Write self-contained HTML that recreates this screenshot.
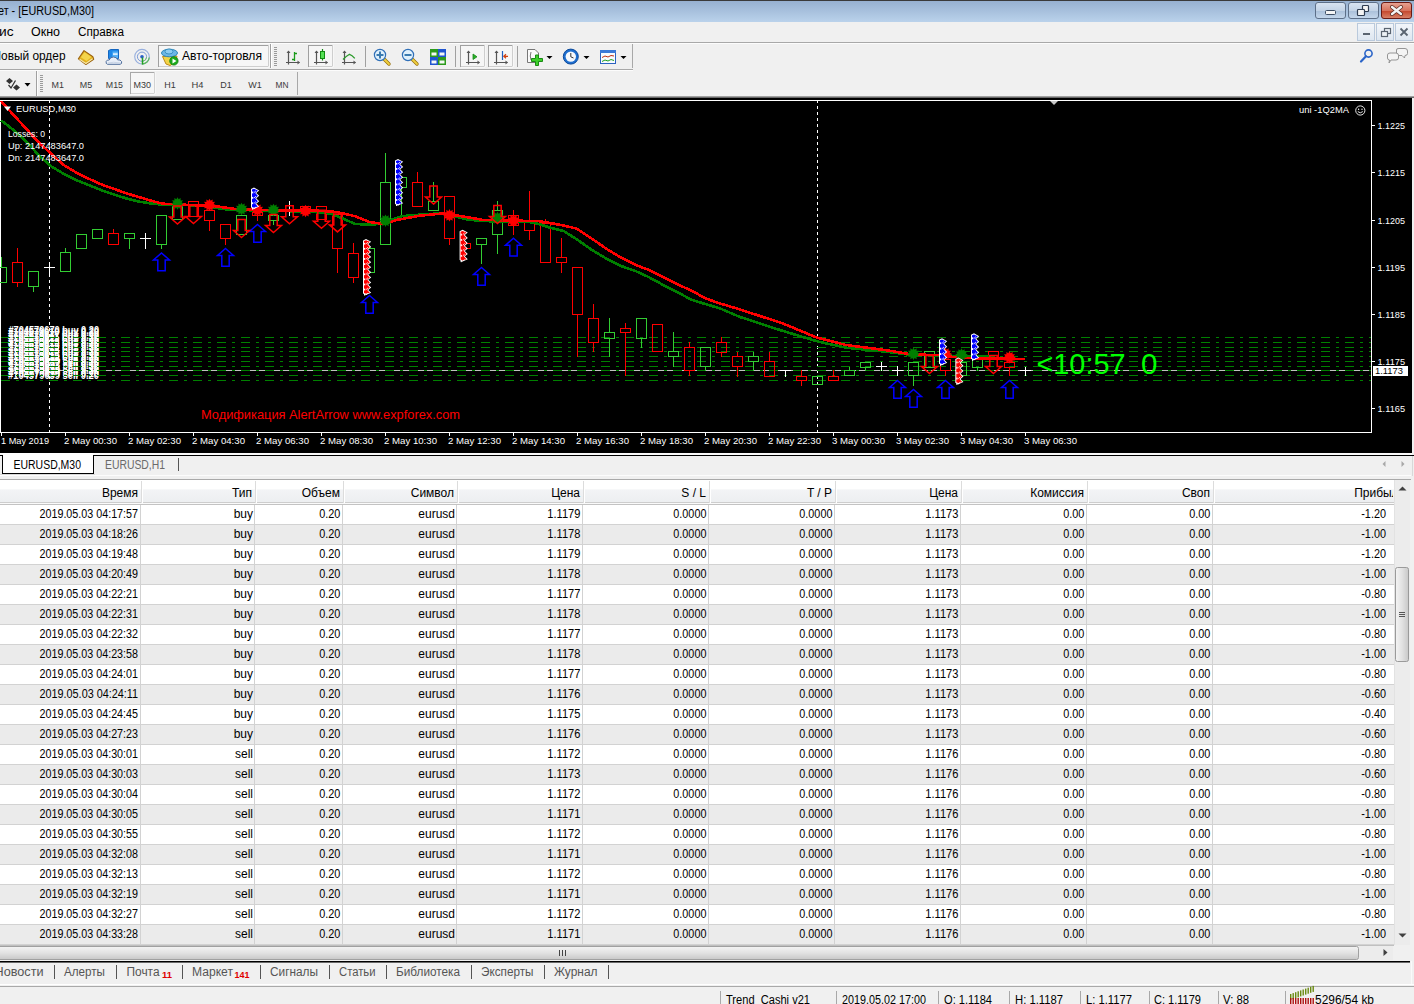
<!DOCTYPE html>
<html><head><meta charset="utf-8"><title>MT4</title>
<style>html,body{margin:0;padding:0;background:#f0f0f0;overflow:hidden;width:1414px;height:1004px}
svg{display:block;font-family:"Liberation Sans",sans-serif}</style></head>
<body><svg width="1414" height="1004" viewBox="0 0 1414 1004">
<defs>
<linearGradient id="gTitle" x1="0" y1="0" x2="0" y2="1"><stop offset="0" stop-color="#95afcf"/><stop offset="1" stop-color="#bad2eb"/></linearGradient>
<linearGradient id="gHdr" x1="0" y1="0" x2="0" y2="1"><stop offset="0" stop-color="#ffffff"/><stop offset="0.4" stop-color="#ffffff"/><stop offset="0.42" stop-color="#f3f4f6"/><stop offset="1" stop-color="#eceef0"/></linearGradient>
<linearGradient id="gScroll" x1="0" y1="0" x2="0" y2="1"><stop offset="0" stop-color="#f4f4f4"/><stop offset="0.5" stop-color="#e2e2e2"/><stop offset="1" stop-color="#c8c8c8"/></linearGradient>
<linearGradient id="gVScroll" x1="0" y1="0" x2="1" y2="0"><stop offset="0" stop-color="#f4f4f4"/><stop offset="0.5" stop-color="#e2e2e2"/><stop offset="1" stop-color="#c8c8c8"/></linearGradient>
<linearGradient id="gBtn" x1="0" y1="0" x2="0" y2="1"><stop offset="0" stop-color="#d9e4f1"/><stop offset="0.5" stop-color="#c3d3e6"/><stop offset="0.51" stop-color="#a9bfd9"/><stop offset="1" stop-color="#c6d8ec"/></linearGradient>
<linearGradient id="gClose" x1="0" y1="0" x2="0" y2="1"><stop offset="0" stop-color="#e8a494"/><stop offset="0.5" stop-color="#d7735d"/><stop offset="0.51" stop-color="#c4442a"/><stop offset="1" stop-color="#d9846a"/></linearGradient>
<linearGradient id="gMdi" x1="0" y1="0" x2="0" y2="1"><stop offset="0" stop-color="#f3f6fa"/><stop offset="1" stop-color="#dde6f0"/></linearGradient>
</defs>
<rect x="0" y="0" width="1414" height="1004" fill="#f0f0f0" />
<rect x="0" y="0" width="1414" height="22" fill="url(#gTitle)" />
<rect x="0" y="0" width="1414" height="1" fill="#3a3a3a" />
<text x="-2" y="14.6" font-size="12" fill="#000" textLength="96" lengthAdjust="spacingAndGlyphs" >ет - [EURUSD,M30]</text>
<rect x="1315.5" y="2.5" width="30" height="16" rx="2.5" fill="url(#gBtn)" stroke="#5d6f88"/>
<rect x="1348.5" y="2.5" width="30" height="16" rx="2.5" fill="url(#gBtn)" stroke="#5d6f88"/>
<rect x="1381.5" y="2.5" width="30" height="16" rx="2.5" fill="url(#gClose)" stroke="#6a1a14"/>
<rect x="1325.5" y="10.5" width="10" height="4" fill="#f4f4f4" stroke="#3c4c62" rx="1"/>
<rect x="1362.5" y="5.5" width="6" height="6" fill="#f4f4f4" stroke="#2f3d52" stroke-width="1.2" rx="0.8"/>
<rect x="1357.5" y="9.5" width="7" height="6" fill="#f4f4f4" stroke="#2f3d52" stroke-width="1.2" rx="0.8"/>
<path d="M1392 7 L1401 14 M1401 7 L1392 14" stroke="#5a2a20" stroke-width="4" stroke-linecap="round"/>
<path d="M1392 7 L1401 14 M1401 7 L1392 14" stroke="#f4f4f4" stroke-width="2.4" stroke-linecap="round"/>
<text x="-1" y="36" font-size="12" fill="#000" textLength="14.5" lengthAdjust="spacingAndGlyphs" >ис</text>
<text x="31" y="36" font-size="12" fill="#000" textLength="29" lengthAdjust="spacingAndGlyphs" >Окно</text>
<text x="78" y="36" font-size="12" fill="#000" textLength="46" lengthAdjust="spacingAndGlyphs" >Справка</text>
<rect x="1357.5" y="23.5" width="17" height="17" fill="url(#gMdi)" stroke="#b9c9dc"/>
<rect x="1376.5" y="23.5" width="17" height="17" fill="url(#gMdi)" stroke="#b9c9dc"/>
<rect x="1395.5" y="23.5" width="17" height="17" fill="url(#gMdi)" stroke="#b9c9dc"/>
<rect x="1363" y="33" width="7" height="2" fill="#5a6470"/>
<rect x="1384.5" y="28.5" width="6" height="5" fill="none" stroke="#5a6470" stroke-width="1.2"/>
<rect x="1381.5" y="31.5" width="6" height="5" fill="#eef2f6" stroke="#5a6470" stroke-width="1.2"/>
<path d="M1400.5 28.5 L1407.5 35.5 M1407.5 28.5 L1400.5 35.5" stroke="#5a6470" stroke-width="1.8"/>
<rect x="0" y="42" width="1414" height="1" fill="#a8a8a8" />
<rect x="0" y="43" width="1414" height="1" fill="#fcfcfc" />
<text x="-7.5" y="60" font-size="12" fill="#000" textLength="73" lengthAdjust="spacingAndGlyphs" >Новый ордер</text>
<path d="M84 50.6 L92.9 56.8 L93.7 59.2 L85.9 64.5 L78.4 58.8 Z" fill="#e2b01c" stroke="#9a620e" stroke-width="1.1" stroke-linejoin="round"/>
<path d="M84.6 52.2 L91.5 57 L86.5 61 L80.8 57.2 Z" fill="#f4d44a"/>
<path d="M79.6 59.2 L85.9 63.6 L92.6 58.8" fill="none" stroke="#f6e6a8" stroke-width="1.2"/>
<path d="M108.5 50.5 L111 49.5 L118.5 49.5 L118.5 58.5 L108.5 58.5 Z" fill="#1e88e8" stroke="#1466c0" stroke-width="1"/>
<path d="M112.5 51.5 L118 51.5 L118 58 L112.5 58 Z" fill="#5ab4f8"/>
<rect x="113" y="53.3" width="4.6" height="1.6" fill="#e6f4ff"/>
<path d="M107.5 64.3 Q105.6 63.8 106.2 61.4 Q107 59.6 109.2 60 Q110 57 113.5 57 Q116.8 57 117.6 59.8 Q120.5 59.4 121.6 61.6 Q122.2 64 120 64.3 Z" fill="#e8eef8" stroke="#4f6e9c" stroke-width="1"/>
<path d="M108 63 Q113 61.5 120.5 63" fill="none" stroke="#c4d0e2" stroke-width="0.9"/>
<circle cx="142" cy="56.7" r="7.3" fill="none" stroke="#7a9ad8" stroke-width="1.1" opacity="0.75"/>
<circle cx="142" cy="56.7" r="4.6" fill="none" stroke="#5f86d0" stroke-width="1" opacity="0.8"/>
<path d="M142.3 64 A7.3 7.3 0 0 0 149.3 57.5" fill="none" stroke="#5cb85c" stroke-width="1.3"/>
<path d="M142.3 61.3 A4.6 4.6 0 0 0 146.6 57.2" fill="none" stroke="#78c078" stroke-width="1"/>
<circle cx="142" cy="56.7" r="1.8" fill="#2a5fc8"/>
<path d="M142.5 57.5 L142.5 64.5" stroke="#22a022" stroke-width="1.5"/>
<rect x="158.5" y="45.5" width="110" height="21" fill="#f6f6f6" stroke="#a0a0a0"/>
<path d="M159 67 L269 67 L269 45" fill="none" stroke="#fdfdfd"/>
<path d="M162.5 56.5 L177 56 L176 62 L170 65.5 L166 64 Z" fill="#f2d448" stroke="#c08a18" stroke-width="1"/>
<ellipse cx="169.5" cy="53" rx="8" ry="3.8" fill="#6cb6e6" stroke="#2d86b8" stroke-width="1"/>
<ellipse cx="169" cy="51.5" rx="4" ry="2.5" fill="#8dccf2" stroke="#2d86b8" stroke-width="0.8"/>
<circle cx="173.9" cy="60.9" r="4.2" fill="#1cab1c" stroke="#0d7d0d" stroke-width="0.8"/>
<path d="M172.5 58.5 L176.5 61 L172.5 63.5 Z" fill="#fff"/>
<text x="182" y="60" font-size="12" fill="#000" textLength="80" lengthAdjust="spacingAndGlyphs" >Авто-торговля</text>
<rect x="270" y="44" width="1" height="24" fill="#a0a0a0" />
<rect x="271" y="44" width="1" height="24" fill="#ffffff" />
<rect x="274" y="47" width="3" height="1" fill="#9a9a9a" />
<rect x="274" y="49" width="3" height="1" fill="#9a9a9a" />
<rect x="274" y="51" width="3" height="1" fill="#9a9a9a" />
<rect x="274" y="53" width="3" height="1" fill="#9a9a9a" />
<rect x="274" y="55" width="3" height="1" fill="#9a9a9a" />
<rect x="274" y="57" width="3" height="1" fill="#9a9a9a" />
<rect x="274" y="59" width="3" height="1" fill="#9a9a9a" />
<rect x="274" y="61" width="3" height="1" fill="#9a9a9a" />
<rect x="274" y="63" width="3" height="1" fill="#9a9a9a" />
<rect x="274" y="65" width="3" height="1" fill="#9a9a9a" />
<path d="M288.5 51 L288.5 64.5 M286 62.5 L299.5 62.5" stroke="#555" stroke-width="1.2" fill="none"/>
<path d="M286.5 53 L288.5 50.5 L290.5 53 Z M297.5 60.5 L300 62.5 L297.5 64.5 Z" fill="#555"/>
<path d="M292 59.5 L294.5 59.5 L294.5 53.5 L297 53.5 M294.5 52 L294.5 61" stroke="#1a9a1a" stroke-width="1.3" fill="none"/>
<rect x="308.5" y="45.5" width="24" height="21" fill="#f6f6f6" stroke="#a0a0a0"/>
<path d="M309 67 L333 67 L333 45" fill="none" stroke="#fdfdfd"/>
<path d="M316.5 51 L316.5 64.5 M314 62.5 L327.5 62.5" stroke="#555" stroke-width="1.2" fill="none"/>
<path d="M314.5 53 L316.5 50.5 L318.5 53 Z M325.5 60.5 L328 62.5 L325.5 64.5 Z" fill="#555"/>
<path d="M322.5 49 L322.5 60.5" stroke="#138a13" stroke-width="1.2"/>
<rect x="320.5" y="51.5" width="4" height="7" fill="#55e055" stroke="#138a13"/>
<path d="M344.5 51 L344.5 64.5 M342 62.5 L355.5 62.5" stroke="#555" stroke-width="1.2" fill="none"/>
<path d="M342.5 53 L344.5 50.5 L346.5 53 Z M353.5 60.5 L356 62.5 L353.5 64.5 Z" fill="#555"/>
<path d="M343 59.5 Q346.5 56 349.5 54.3 Q352 55 354.8 58.3" stroke="#2a9a2a" stroke-width="1.3" fill="none"/>
<rect x="365" y="46" width="1" height="21" fill="#a0a0a0" />
<path d="M383 58 L389 64" stroke="#9a7410" stroke-width="3.4" stroke-linecap="round"/>
<path d="M383 58 L389 64" stroke="#f0d040" stroke-width="1.8" stroke-linecap="round"/>
<circle cx="380" cy="55" r="5.6" fill="#dff0fc" stroke="#2f6fb8" stroke-width="1.2"/>
<rect x="376.5" y="54" width="7" height="2" fill="#3a7ab0"/>
<rect x="379" y="51.5" width="2" height="7" fill="#3a7ab0"/>
<path d="M411 58 L417 64" stroke="#9a7410" stroke-width="3.4" stroke-linecap="round"/>
<path d="M411 58 L417 64" stroke="#f0d040" stroke-width="1.8" stroke-linecap="round"/>
<circle cx="408" cy="55" r="5.6" fill="#dff0fc" stroke="#2f6fb8" stroke-width="1.2"/>
<rect x="404.5" y="54" width="7" height="2" fill="#3a7ab0"/>
<rect x="430" y="49" width="8" height="8" fill="#2c9a1c" />
<rect x="431.5" y="52.5" width="5" height="3" fill="#f4f8f4" />
<rect x="438" y="49" width="8" height="8" fill="#1f55d0" />
<rect x="439.5" y="52.5" width="5" height="3" fill="#f4f8f4" />
<rect x="430" y="57" width="8" height="8" fill="#1f55d0" />
<rect x="431.5" y="60.5" width="5" height="3" fill="#f4f8f4" />
<rect x="438" y="57" width="8" height="8" fill="#2c9a1c" />
<rect x="439.5" y="60.5" width="5" height="3" fill="#f4f8f4" />
<rect x="455" y="46" width="1" height="21" fill="#a0a0a0" />
<rect x="460.5" y="45.5" width="24" height="21" fill="#f6f6f6" stroke="#a0a0a0"/>
<path d="M461 67 L485 67 L485 45" fill="none" stroke="#fdfdfd"/>
<rect x="488.5" y="45.5" width="24" height="21" fill="#f6f6f6" stroke="#a0a0a0"/>
<path d="M489 67 L513 67 L513 45" fill="none" stroke="#fdfdfd"/>
<path d="M468.5 51 L468.5 64.5 M466 62.5 L479.5 62.5" stroke="#555" stroke-width="1.2" fill="none"/>
<path d="M466.5 53 L468.5 50.5 L470.5 53 Z M477.5 60.5 L480 62.5 L477.5 64.5 Z" fill="#555"/>
<path d="M473 54 L477 56.8 L473 59.5 Z" fill="#2ab02a" stroke="#1a8a1a" stroke-width="0.8"/>
<path d="M496.5 51 L496.5 64.5 M494 62.5 L507.5 62.5" stroke="#555" stroke-width="1.2" fill="none"/>
<path d="M494.5 53 L496.5 50.5 L498.5 53 Z M505.5 60.5 L508 62.5 L505.5 64.5 Z" fill="#555"/>
<path d="M502.5 51 L502.5 60" stroke="#2060c0" stroke-width="1.2"/>
<path d="M508 56.3 L504 56.3 M506 54.3 L503.8 56.3 L506 58.3" stroke="#d04010" stroke-width="1.2" fill="none"/>
<rect x="517" y="46" width="1" height="21" fill="#a0a0a0" />
<path d="M527.5 49.5 L535 49.5 L538.5 53 L538.5 62.5 L527.5 62.5 Z" fill="#fafafa" stroke="#777"/>
<path d="M531 52 Q529.5 56 531 60" stroke="#777" fill="none"/>
<path d="M535.5 55 L538.5 55 L538.5 58.5 L542.5 58.5 L542.5 61.5 L538.5 61.5 L538.5 65.5 L535.5 65.5 L535.5 61.5 L531.5 61.5 L531.5 58.5 L535.5 58.5 Z" fill="#3ccf2a" stroke="#1a8a14" stroke-width="1"/>
<path d="M546.5 56 L552.5 56 L549.5 59 Z" fill="#000"/>
<circle cx="570.8" cy="56.6" r="7.5" fill="#1e6fd0" stroke="#0d4a9a" stroke-width="1"/>
<circle cx="570.8" cy="56.6" r="5.2" fill="#f6f9fc"/>
<path d="M570.8 53 L570.8 56.8 L573.5 58" stroke="#333" stroke-width="1" fill="none"/>
<path d="M583.5 56 L589.5 56 L586.5 59 Z" fill="#000"/>
<rect x="600.5" y="50.5" width="15" height="13" fill="#f8fbff" stroke="#2a62c0"/>
<rect x="600" y="50" width="16" height="3" fill="#3a7ad8" />
<path d="M602 57.5 L605 56 L608 57 L611 55.5 L614 56" stroke="#c03010" fill="none" stroke-width="1"/>
<path d="M602 61.5 L605 60 L608 61 L611 59.5 L614 60.5" stroke="#20a020" fill="none" stroke-width="1"/>
<path d="M620.5 56 L626.5 56 L623.5 59 Z" fill="#000"/>
<rect x="632" y="44" width="1" height="24" fill="#a8a8a8" />
<circle cx="1368.5" cy="53.5" r="3.6" fill="none" stroke="#2a64c8" stroke-width="1.6"/>
<path d="M1366 56.3 L1361 61.5" stroke="#2a64c8" stroke-width="2.2" stroke-linecap="round"/>
<path d="M1396.5 50 Q1396 48.5 1399 48.5 L1405 48.5 Q1407.5 48.5 1407.5 51 L1407.5 53.5 Q1407.5 55.5 1405 55.5 L1404.5 58 L1402 55.5 L1399 55.5 Q1396.5 55.5 1396.5 53.5 Z" fill="#f4f4f4" stroke="#8a8a8a" stroke-width="0.9"/>
<path d="M1387.5 55 Q1387.5 53 1390 53 L1396 53 Q1398.5 53 1398.5 55.5 L1398.5 58 Q1398.5 60 1396 60 L1391 60 L1389 63 L1389.5 60 Q1387.5 60 1387.5 58 Z" fill="#f4f4f4" stroke="#8a8a8a" stroke-width="0.9"/>
<rect x="0" y="69" width="633" height="1" fill="#a8a8a8" />
<rect x="0" y="70" width="633" height="1" fill="#fcfcfc" />
<path d="M6 81 L9.5 78 L13 81 L9.5 84 Z M13 87.5 L16.5 84.5 L20 87.5 L16.5 90.5 Z" fill="#333"/>
<path d="M8.5 85 L11 88 L15.5 80.5" stroke="#333" stroke-width="1.3" fill="none"/>
<path d="M24.5 83 L30.5 83 L27.5 86.5 Z" fill="#000"/>
<rect x="36" y="71" width="1" height="25" fill="#a0a0a0" />
<rect x="37" y="71" width="1" height="25" fill="#fcfcfc" />
<rect x="40" y="75" width="3" height="1" fill="#9a9a9a" />
<rect x="40" y="77" width="3" height="1" fill="#9a9a9a" />
<rect x="40" y="79" width="3" height="1" fill="#9a9a9a" />
<rect x="40" y="81" width="3" height="1" fill="#9a9a9a" />
<rect x="40" y="83" width="3" height="1" fill="#9a9a9a" />
<rect x="40" y="85" width="3" height="1" fill="#9a9a9a" />
<rect x="40" y="87" width="3" height="1" fill="#9a9a9a" />
<rect x="40" y="89" width="3" height="1" fill="#9a9a9a" />
<rect x="40" y="91" width="3" height="1" fill="#9a9a9a" />
<rect x="130.5" y="72.5" width="24" height="21" fill="#f6f6f6" stroke="#a8a8a8"/>
<path d="M131 94 L155 94 L155 72" fill="none" stroke="#fdfdfd"/>
<text x="57.7" y="88" font-size="9.6" fill="#3a3a3a" text-anchor="middle" textLength="12.4" lengthAdjust="spacingAndGlyphs" >M1</text>
<text x="86" y="88" font-size="9.6" fill="#3a3a3a" text-anchor="middle" textLength="12.4" lengthAdjust="spacingAndGlyphs" >M5</text>
<text x="114.4" y="88" font-size="9.6" fill="#3a3a3a" text-anchor="middle" textLength="17.2" lengthAdjust="spacingAndGlyphs" >M15</text>
<text x="142.3" y="88" font-size="9.6" fill="#3a3a3a" text-anchor="middle" textLength="17.5" lengthAdjust="spacingAndGlyphs" >M30</text>
<text x="170" y="88" font-size="9.6" fill="#3a3a3a" text-anchor="middle" textLength="11.5" lengthAdjust="spacingAndGlyphs" >H1</text>
<text x="197.5" y="88" font-size="9.6" fill="#3a3a3a" text-anchor="middle" textLength="12" lengthAdjust="spacingAndGlyphs" >H4</text>
<text x="226" y="88" font-size="9.6" fill="#3a3a3a" text-anchor="middle" textLength="11.5" lengthAdjust="spacingAndGlyphs" >D1</text>
<text x="255" y="88" font-size="9.6" fill="#3a3a3a" text-anchor="middle" textLength="13.5" lengthAdjust="spacingAndGlyphs" >W1</text>
<text x="282" y="88" font-size="9.6" fill="#3a3a3a" text-anchor="middle" textLength="13" lengthAdjust="spacingAndGlyphs" >MN</text>
<rect x="297" y="72" width="1" height="23" fill="#a8a8a8" />
<rect x="0" y="96" width="1414" height="1" fill="#a0a0a0" />
<rect x="0" y="97" width="1414" height="1" fill="#6a6a6a" />
<rect x="0" y="98" width="1412" height="355" fill="#000" />
<rect x="1412" y="98" width="2" height="355" fill="#f0f0f0" />
<g shape-rendering="crispEdges">
<path d="M0.5 100.5 L1371.5 100.5 L1371.5 432.5 L0.5 432.5 Z" fill="none" stroke="#fff"/>
</g>
<rect x="1372" y="125" width="3" height="1" fill="#fff" />
<text x="1377.5" y="128.6" font-size="9" fill="#fff" textLength="27.5" lengthAdjust="spacingAndGlyphs" >1.1225</text>
<rect x="1372" y="172" width="3" height="1" fill="#fff" />
<text x="1377.5" y="175.6" font-size="9" fill="#fff" textLength="27.5" lengthAdjust="spacingAndGlyphs" >1.1215</text>
<rect x="1372" y="220" width="3" height="1" fill="#fff" />
<text x="1377.5" y="223.6" font-size="9" fill="#fff" textLength="27.5" lengthAdjust="spacingAndGlyphs" >1.1205</text>
<rect x="1372" y="267" width="3" height="1" fill="#fff" />
<text x="1377.5" y="270.6" font-size="9" fill="#fff" textLength="27.5" lengthAdjust="spacingAndGlyphs" >1.1195</text>
<rect x="1372" y="314" width="3" height="1" fill="#fff" />
<text x="1377.5" y="317.6" font-size="9" fill="#fff" textLength="27.5" lengthAdjust="spacingAndGlyphs" >1.1185</text>
<rect x="1372" y="361" width="3" height="1" fill="#fff" />
<text x="1377.5" y="364.6" font-size="9" fill="#fff" textLength="27.5" lengthAdjust="spacingAndGlyphs" >1.1175</text>
<rect x="1372" y="408" width="3" height="1" fill="#fff" />
<text x="1377.5" y="411.6" font-size="9" fill="#fff" textLength="27.5" lengthAdjust="spacingAndGlyphs" >1.1165</text>
<rect x="1" y="433" width="1" height="3" fill="#fff" />
<text x="1" y="444" font-size="9.6" fill="#fff" textLength="48" lengthAdjust="spacingAndGlyphs" >1 May 2019</text>
<rect x="65" y="433" width="1" height="3" fill="#fff" />
<text x="64" y="444" font-size="9.6" fill="#fff" textLength="53" lengthAdjust="spacingAndGlyphs" >2 May 00:30</text>
<rect x="129" y="433" width="1" height="3" fill="#fff" />
<text x="128" y="444" font-size="9.6" fill="#fff" textLength="53" lengthAdjust="spacingAndGlyphs" >2 May 02:30</text>
<rect x="193" y="433" width="1" height="3" fill="#fff" />
<text x="192" y="444" font-size="9.6" fill="#fff" textLength="53" lengthAdjust="spacingAndGlyphs" >2 May 04:30</text>
<rect x="257" y="433" width="1" height="3" fill="#fff" />
<text x="256" y="444" font-size="9.6" fill="#fff" textLength="53" lengthAdjust="spacingAndGlyphs" >2 May 06:30</text>
<rect x="321" y="433" width="1" height="3" fill="#fff" />
<text x="320" y="444" font-size="9.6" fill="#fff" textLength="53" lengthAdjust="spacingAndGlyphs" >2 May 08:30</text>
<rect x="385" y="433" width="1" height="3" fill="#fff" />
<text x="384" y="444" font-size="9.6" fill="#fff" textLength="53" lengthAdjust="spacingAndGlyphs" >2 May 10:30</text>
<rect x="449" y="433" width="1" height="3" fill="#fff" />
<text x="448" y="444" font-size="9.6" fill="#fff" textLength="53" lengthAdjust="spacingAndGlyphs" >2 May 12:30</text>
<rect x="513" y="433" width="1" height="3" fill="#fff" />
<text x="512" y="444" font-size="9.6" fill="#fff" textLength="53" lengthAdjust="spacingAndGlyphs" >2 May 14:30</text>
<rect x="577" y="433" width="1" height="3" fill="#fff" />
<text x="576" y="444" font-size="9.6" fill="#fff" textLength="53" lengthAdjust="spacingAndGlyphs" >2 May 16:30</text>
<rect x="641" y="433" width="1" height="3" fill="#fff" />
<text x="640" y="444" font-size="9.6" fill="#fff" textLength="53" lengthAdjust="spacingAndGlyphs" >2 May 18:30</text>
<rect x="705" y="433" width="1" height="3" fill="#fff" />
<text x="704" y="444" font-size="9.6" fill="#fff" textLength="53" lengthAdjust="spacingAndGlyphs" >2 May 20:30</text>
<rect x="769" y="433" width="1" height="3" fill="#fff" />
<text x="768" y="444" font-size="9.6" fill="#fff" textLength="53" lengthAdjust="spacingAndGlyphs" >2 May 22:30</text>
<rect x="833" y="433" width="1" height="3" fill="#fff" />
<text x="832" y="444" font-size="9.6" fill="#fff" textLength="53" lengthAdjust="spacingAndGlyphs" >3 May 00:30</text>
<rect x="897" y="433" width="1" height="3" fill="#fff" />
<text x="896" y="444" font-size="9.6" fill="#fff" textLength="53" lengthAdjust="spacingAndGlyphs" >3 May 02:30</text>
<rect x="961" y="433" width="1" height="3" fill="#fff" />
<text x="960" y="444" font-size="9.6" fill="#fff" textLength="53" lengthAdjust="spacingAndGlyphs" >3 May 04:30</text>
<rect x="1025" y="433" width="1" height="3" fill="#fff" />
<text x="1024" y="444" font-size="9.6" fill="#fff" textLength="53" lengthAdjust="spacingAndGlyphs" >3 May 06:30</text>
<path d="M1050 101 L1058 101 L1054 105 Z" fill="#c8c8c8"/>
<g shape-rendering="crispEdges">
<path d="M49.5 100 L49.5 432" stroke="#fff" stroke-dasharray="3 3"/>
<path d="M817.5 100 L817.5 432" stroke="#fff" stroke-dasharray="3 3"/>
</g>
<rect x="2" y="370" width="1369" height="1" fill="#c0c0c0" />
<text x="8" y="335.5" font-size="11" fill="#fff" textLength="91" lengthAdjust="spacingAndGlyphs" font-weight="bold" >#104579610 buy 0.20</text>
<text x="8.5" y="333.5" font-size="11" fill="#fff" textLength="90.5" lengthAdjust="spacingAndGlyphs" font-weight="bold" >#704579670 buy 0.20</text>
<text x="8" y="340.5" font-size="11" fill="#fff" textLength="91" lengthAdjust="spacingAndGlyphs" font-weight="bold" >#104579611 buy 0.20</text>
<text x="8.5" y="338.5" font-size="11" fill="#fff" textLength="90.5" lengthAdjust="spacingAndGlyphs" font-weight="bold" >#704579677 buy 0.20</text>
<text x="8" y="345.5" font-size="11" fill="#fff" textLength="91" lengthAdjust="spacingAndGlyphs" font-weight="bold" >#104579612 buy 0.20</text>
<text x="8.5" y="343.5" font-size="11" fill="#fff" textLength="90.5" lengthAdjust="spacingAndGlyphs" font-weight="bold" >#704579672 buy 0.20</text>
<text x="8" y="349.5" font-size="11" fill="#fff" textLength="91" lengthAdjust="spacingAndGlyphs" font-weight="bold" >#104579613 buy 0.20</text>
<text x="8.5" y="347.5" font-size="11" fill="#fff" textLength="90.5" lengthAdjust="spacingAndGlyphs" font-weight="bold" >#704579673 buy 0.20</text>
<text x="8" y="354.5" font-size="11" fill="#fff" textLength="91" lengthAdjust="spacingAndGlyphs" font-weight="bold" >#104579614 buy 0.20</text>
<text x="8.5" y="352.5" font-size="11" fill="#fff" textLength="90.5" lengthAdjust="spacingAndGlyphs" font-weight="bold" >#704579674 buy 0.20</text>
<text x="8" y="359.5" font-size="11" fill="#fff" textLength="91" lengthAdjust="spacingAndGlyphs" font-weight="bold" >#104579615 buy 0.20</text>
<text x="8.5" y="357.5" font-size="11" fill="#fff" textLength="90.5" lengthAdjust="spacingAndGlyphs" font-weight="bold" >#704579675 buy 0.20</text>
<text x="8" y="364.5" font-size="11" fill="#fff" textLength="91" lengthAdjust="spacingAndGlyphs" font-weight="bold" >#104579636 sell 0.20</text>
<text x="8.5" y="362.5" font-size="11" fill="#fff" textLength="90.5" lengthAdjust="spacingAndGlyphs" font-weight="bold" >#704579636 sell 0.20</text>
<text x="8" y="368.5" font-size="11" fill="#fff" textLength="91" lengthAdjust="spacingAndGlyphs" font-weight="bold" >#104579637 sell 0.20</text>
<text x="8.5" y="366.5" font-size="11" fill="#fff" textLength="90.5" lengthAdjust="spacingAndGlyphs" font-weight="bold" >#704579637 sell 0.20</text>
<text x="8" y="373.5" font-size="11" fill="#fff" textLength="91" lengthAdjust="spacingAndGlyphs" font-weight="bold" >#104579638 sell 0.20</text>
<text x="8.5" y="371.5" font-size="11" fill="#fff" textLength="90.5" lengthAdjust="spacingAndGlyphs" font-weight="bold" >#704579638 sell 0.20</text>
<text x="8" y="378.5" font-size="11" fill="#fff" textLength="91" lengthAdjust="spacingAndGlyphs" font-weight="bold" >#104579639 sell 0.20</text>
<text x="8.5" y="376.5" font-size="11" fill="#fff" textLength="90.5" lengthAdjust="spacingAndGlyphs" font-weight="bold" >#704579639 sell 0.20</text>
<g shape-rendering="crispEdges">
<path d="M1 337.5 L1371 337.5" stroke="#008000" stroke-dasharray="9 6 3 6"/>
<path d="M1 342.5 L1371 342.5" stroke="#008000" stroke-dasharray="9 6 3 6"/>
<path d="M1 347.5 L1371 347.5" stroke="#008000" stroke-dasharray="9 6 3 6"/>
<path d="M1 351.5 L1371 351.5" stroke="#008000" stroke-dasharray="9 6 3 6"/>
<path d="M1 356.5 L1371 356.5" stroke="#008000" stroke-dasharray="9 6 3 6"/>
<path d="M1 361.5 L1371 361.5" stroke="#008000" stroke-dasharray="9 6 3 6"/>
<path d="M1 366.5 L1371 366.5" stroke="#008000" stroke-dasharray="9 6 3 6"/>
<path d="M1 370.5 L1371 370.5" stroke="#008000" stroke-dasharray="9 6 3 6"/>
<path d="M1 375.5 L1371 375.5" stroke="#008000" stroke-dasharray="9 6 3 6"/>
<path d="M1 380.5 L1371 380.5" stroke="#008000" stroke-dasharray="9 6 3 6"/>
</g>
<rect x="1373" y="366" width="35" height="10" fill="#fff" />
<text x="1375" y="374" font-size="9" fill="#000" textLength="28" lengthAdjust="spacingAndGlyphs" >1.1173</text>
<g shape-rendering="crispEdges" fill="none">
<rect x="-3.5" y="267.5" width="10" height="15" stroke="#32cd32"/>
<path d="M1.5 257 L1.5 267" stroke="#32cd32"/>
<rect x="12.5" y="262.5" width="10" height="20" stroke="#ff0000"/>
<path d="M17.5 248 L17.5 262" stroke="#ff0000"/>
<path d="M17.5 283 L17.5 287" stroke="#ff0000"/>
<rect x="28.5" y="271.5" width="10" height="15" stroke="#32cd32"/>
<path d="M33.5 287 L33.5 292" stroke="#32cd32"/>
<rect x="60.5" y="252.5" width="10" height="19" stroke="#32cd32"/>
<path d="M65.5 248 L65.5 252" stroke="#32cd32"/>
<rect x="76.5" y="234.5" width="10" height="14" stroke="#32cd32"/>
<rect x="92.5" y="229.5" width="10" height="9" stroke="#32cd32"/>
<rect x="108.5" y="233.5" width="10" height="11" stroke="#ff0000"/>
<path d="M113.5 229 L113.5 233" stroke="#ff0000"/>
<rect x="124.5" y="233.5" width="10" height="5" stroke="#32cd32"/>
<path d="M129.5 239 L129.5 249" stroke="#32cd32"/>
<rect x="156.5" y="215.5" width="10" height="29" stroke="#32cd32"/>
<path d="M161.5 245 L161.5 249" stroke="#32cd32"/>
<rect x="172.5" y="205.5" width="10" height="14" stroke="#32cd32"/>
<rect x="188.5" y="201.5" width="10" height="15" stroke="#ff0000"/>
<rect x="204.5" y="210.5" width="10" height="10" stroke="#ff0000"/>
<path d="M209.5 221 L209.5 231" stroke="#ff0000"/>
<rect x="220.5" y="224.5" width="10" height="14" stroke="#ff0000"/>
<path d="M225.5 239 L225.5 245" stroke="#ff0000"/>
<rect x="236.5" y="215.5" width="10" height="19" stroke="#32cd32"/>
<rect x="252.5" y="211.5" width="10" height="4" stroke="#ff0000"/>
<path d="M257.5 216 L257.5 221" stroke="#ff0000"/>
<rect x="268.5" y="215.5" width="10" height="5" stroke="#32cd32"/>
<path d="M273.5 221 L273.5 225" stroke="#32cd32"/>
<rect x="300.5" y="206.5" width="10" height="4" stroke="#ff0000"/>
<rect x="316.5" y="206.5" width="10" height="13" stroke="#ff0000"/>
<rect x="332.5" y="214.5" width="10" height="34" stroke="#ff0000"/>
<path d="M337.5 249 L337.5 273" stroke="#ff0000"/>
<rect x="348.5" y="253.5" width="10" height="24" stroke="#ff0000"/>
<path d="M353.5 243 L353.5 253" stroke="#ff0000"/>
<path d="M353.5 278 L353.5 283" stroke="#ff0000"/>
<rect x="364.5" y="248.5" width="10" height="24" stroke="#32cd32"/>
<rect x="380.5" y="182.5" width="10" height="62" stroke="#32cd32"/>
<path d="M385.5 153 L385.5 182" stroke="#32cd32"/>
<rect x="396.5" y="177.5" width="10" height="10" stroke="#32cd32"/>
<path d="M401.5 188 L401.5 215" stroke="#32cd32"/>
<rect x="412.5" y="182.5" width="10" height="24" stroke="#ff0000"/>
<path d="M417.5 172 L417.5 182" stroke="#ff0000"/>
<rect x="428.5" y="201.5" width="10" height="9" stroke="#32cd32"/>
<path d="M433.5 182 L433.5 201" stroke="#32cd32"/>
<rect x="444.5" y="196.5" width="10" height="42" stroke="#ff0000"/>
<path d="M449.5 239 L449.5 245" stroke="#ff0000"/>
<rect x="460.5" y="243.5" width="10" height="5" stroke="#ff0000"/>
<rect x="476.5" y="238.5" width="10" height="6" stroke="#32cd32"/>
<path d="M481.5 245 L481.5 264" stroke="#32cd32"/>
<rect x="492.5" y="210.5" width="10" height="24" stroke="#32cd32"/>
<path d="M497.5 201 L497.5 210" stroke="#32cd32"/>
<path d="M497.5 235 L497.5 254" stroke="#32cd32"/>
<rect x="508.5" y="215.5" width="10" height="10" stroke="#ff0000"/>
<path d="M513.5 210 L513.5 215" stroke="#ff0000"/>
<path d="M513.5 226 L513.5 235" stroke="#ff0000"/>
<rect x="524.5" y="220.5" width="10" height="10" stroke="#ff0000"/>
<path d="M529.5 191 L529.5 220" stroke="#ff0000"/>
<path d="M529.5 231 L529.5 240" stroke="#ff0000"/>
<rect x="540.5" y="223.5" width="10" height="39" stroke="#ff0000"/>
<path d="M545.5 219 L545.5 223" stroke="#ff0000"/>
<rect x="556.5" y="257.5" width="10" height="5" stroke="#ff0000"/>
<path d="M561.5 238 L561.5 257" stroke="#ff0000"/>
<path d="M561.5 263 L561.5 273" stroke="#ff0000"/>
<rect x="572.5" y="267.5" width="10" height="47" stroke="#ff0000"/>
<path d="M577.5 315 L577.5 357" stroke="#ff0000"/>
<rect x="588.5" y="318.5" width="10" height="24" stroke="#ff0000"/>
<path d="M593.5 304 L593.5 318" stroke="#ff0000"/>
<path d="M593.5 343 L593.5 352" stroke="#ff0000"/>
<rect x="604.5" y="332.5" width="10" height="6" stroke="#32cd32"/>
<path d="M609.5 318 L609.5 332" stroke="#32cd32"/>
<path d="M609.5 339 L609.5 357" stroke="#32cd32"/>
<rect x="620.5" y="328.5" width="10" height="4" stroke="#ff0000"/>
<path d="M625.5 323 L625.5 328" stroke="#ff0000"/>
<path d="M625.5 333 L625.5 376" stroke="#ff0000"/>
<rect x="636.5" y="318.5" width="10" height="20" stroke="#32cd32"/>
<path d="M641.5 339 L641.5 348" stroke="#32cd32"/>
<rect x="652.5" y="324.5" width="10" height="27" stroke="#ff0000"/>
<rect x="668.5" y="351.5" width="10" height="5" stroke="#32cd32"/>
<path d="M673.5 332 L673.5 351" stroke="#32cd32"/>
<path d="M673.5 357 L673.5 367" stroke="#32cd32"/>
<rect x="684.5" y="347.5" width="10" height="23" stroke="#ff0000"/>
<path d="M689.5 342 L689.5 347" stroke="#ff0000"/>
<path d="M689.5 371 L689.5 376" stroke="#ff0000"/>
<rect x="700.5" y="347.5" width="10" height="19" stroke="#32cd32"/>
<path d="M705.5 367 L705.5 371" stroke="#32cd32"/>
<rect x="716.5" y="342.5" width="10" height="10" stroke="#ff0000"/>
<path d="M721.5 337 L721.5 342" stroke="#ff0000"/>
<path d="M721.5 353 L721.5 357" stroke="#ff0000"/>
<rect x="732.5" y="356.5" width="10" height="10" stroke="#ff0000"/>
<path d="M737.5 352 L737.5 356" stroke="#ff0000"/>
<path d="M737.5 367 L737.5 377" stroke="#ff0000"/>
<rect x="748.5" y="356.5" width="10" height="5" stroke="#32cd32"/>
<path d="M753.5 352 L753.5 356" stroke="#32cd32"/>
<path d="M753.5 362 L753.5 371" stroke="#32cd32"/>
<rect x="764.5" y="361.5" width="10" height="15" stroke="#ff0000"/>
<path d="M769.5 352 L769.5 361" stroke="#ff0000"/>
<rect x="796.5" y="376.5" width="10" height="4" stroke="#ff0000"/>
<path d="M801.5 370 L801.5 376" stroke="#ff0000"/>
<path d="M801.5 381 L801.5 386" stroke="#ff0000"/>
<rect x="812.5" y="376.5" width="10" height="8" stroke="#32cd32"/>
<rect x="828.5" y="376.5" width="10" height="4" stroke="#ff0000"/>
<path d="M833.5 370 L833.5 376" stroke="#ff0000"/>
<rect x="844.5" y="370.5" width="10" height="5" stroke="#32cd32"/>
<path d="M849.5 367 L849.5 370" stroke="#32cd32"/>
<rect x="860.5" y="362.5" width="10" height="5" stroke="#32cd32"/>
<path d="M865.5 368 L865.5 371" stroke="#32cd32"/>
<rect x="908.5" y="362.5" width="10" height="13" stroke="#32cd32"/>
<path d="M913.5 376 L913.5 386" stroke="#32cd32"/>
<rect x="924.5" y="351.5" width="10" height="16" stroke="#32cd32"/>
<rect x="940.5" y="359.5" width="10" height="11" stroke="#ff0000"/>
<path d="M945.5 371 L945.5 376" stroke="#ff0000"/>
<rect x="956.5" y="362.5" width="10" height="13" stroke="#32cd32"/>
<rect x="972.5" y="359.5" width="10" height="8" stroke="#32cd32"/>
<path d="M977.5 368 L977.5 371" stroke="#32cd32"/>
<rect x="988.5" y="351.5" width="10" height="7" stroke="#ff0000"/>
<rect x="1004.5" y="362.5" width="10" height="5" stroke="#ff0000"/>
<path d="M1009.5 368 L1009.5 376" stroke="#ff0000"/>
<path d="M44 267.5 L55 267.5 M49.5 262 L49.5 275" stroke="#fff"/>
<path d="M140 238.5 L151 238.5 M145.5 233 L145.5 249" stroke="#fff"/>
<path d="M284 210.5 L295 210.5 M289.5 201 L289.5 216" stroke="#fff"/>
<path d="M780 370.5 L791 370.5 M785.5 370 L785.5 377" stroke="#fff"/>
<path d="M876 366.5 L887 366.5 M881.5 362 L881.5 371" stroke="#fff"/>
<path d="M892 370.5 L903 370.5 M897.5 366 L897.5 376" stroke="#fff"/>
<path d="M1020 370.5 L1031 370.5 M1025.5 367 L1025.5 376" stroke="#fff"/>
</g>
<polyline points="1,120.4 12.7,129.3 25.5,140.7 38.2,154.7 50.9,166.2 63.6,173.8 76.4,180.2 89.1,185.3 101.8,190.4 114.6,194.8 127.3,198.7 140,201.8 152.8,203.7 160.4,204.4 202.4,205.6 223.6,209.1 236.4,209.9 310,211.7 329.7,213.4 343.9,219 355,224 373.4,224.7 383.3,222.6 401.7,216.2 425.7,214.1 442.7,213.4 468.2,219.8 489.4,221.2 524.7,221.2 538.9,224 550,227.7 564.1,231.2 578.3,240.4 592.4,250.3 606.6,258.8 620.7,265.9 634.9,270.8 649,277.2 663.2,285 677.3,292 691.4,299.8 705.6,304.1 719.7,308.3 740,317 782.4,330.8 817.4,341.4 846.1,347.7 888.5,352 909.7,354.7 994.6,356.9" fill="none" stroke="#008000" stroke-width="2.6" shape-rendering="crispEdges"/>
<polyline points="1,101 12.7,114 25.5,128 38.2,142 50.9,153.5 63.6,165 76.4,172.6 89.1,178.9 101.8,184.6 114.6,189.1 127.3,193.6 140,197.4 152.8,201.2 162.9,203.7 188.3,204.9 213.7,206 236.4,209.1 259,209.9 287.3,210.6 315.6,210.6 336.8,212 355,216.2 369.1,221.9 383.3,224 397.4,219.8 418.6,215.9 442.7,213.4 461,216.2 482.3,219.8 510.6,220.5 538.9,221.2 550,223 564.1,225.6 576.9,228.7 592.4,239 606.6,248.9 620.7,257.4 634.9,264.5 649,270.1 663.2,277.2 677.3,284.3 691.4,290.6 705.6,298.4 719.7,303.4 740,309.5 782.4,323.3 817.4,337.8 846.1,345 888.5,350.5 909.7,354.1 918,354.7 939.5,355 952.2,356.9 973.4,358.3 1025.4,359" fill="none" stroke="#ff0000" stroke-width="2.6" shape-rendering="crispEdges"/>
<polygon points="183.8,203.5 181.65,204.61 182.96,206.65 180.54,206.54 180.65,208.96 178.61,207.65 177.5,209.8 176.39,207.65 174.35,208.96 174.46,206.54 172.04,206.65 173.35,204.61 171.2,203.5 173.35,202.39 172.04,200.35 174.46,200.46 174.35,198.04 176.39,199.35 177.5,197.2 178.61,199.35 180.65,198.04 180.54,200.46 182.96,200.35 181.65,202.39" fill="#008000"/>
<polygon points="247.8,209.0 245.65,210.11 246.96,212.15 244.54,212.04 244.65,214.46 242.61,213.15 241.5,215.3 240.39,213.15 238.35,214.46 238.46,212.04 236.04,212.15 237.35,210.11 235.2,209.0 237.35,207.89 236.04,205.85 238.46,205.96 238.35,203.54 240.39,204.85 241.5,202.7 242.61,204.85 244.65,203.54 244.54,205.96 246.96,205.85 245.65,207.89" fill="#008000"/>
<polygon points="279.8,210.0 277.65,211.11 278.96,213.15 276.54,213.04 276.65,215.46 274.61,214.15 273.5,216.3 272.39,214.15 270.35,215.46 270.46,213.04 268.04,213.15 269.35,211.11 267.2,210.0 269.35,208.89 268.04,206.85 270.46,206.96 270.35,204.54 272.39,205.85 273.5,203.7 274.61,205.85 276.65,204.54 276.54,206.96 278.96,206.85 277.65,208.89" fill="#008000"/>
<polygon points="391.8,220.7 389.65,221.81 390.96,223.85 388.54,223.74 388.65,226.16 386.61,224.85 385.5,227.0 384.39,224.85 382.35,226.16 382.46,223.74 380.04,223.85 381.35,221.81 379.2,220.7 381.35,219.59 380.04,217.55 382.46,217.66 382.35,215.24 384.39,216.55 385.5,214.4 386.61,216.55 388.65,215.24 388.54,217.66 390.96,217.55 389.65,219.59" fill="#008000"/>
<polygon points="503.8,218.0 501.65,219.11 502.96,221.15 500.54,221.04 500.65,223.46 498.61,222.15 497.5,224.3 496.39,222.15 494.35,223.46 494.46,221.04 492.04,221.15 493.35,219.11 491.2,218.0 493.35,216.89 492.04,214.85 494.46,214.96 494.35,212.54 496.39,213.85 497.5,211.7 498.61,213.85 500.65,212.54 500.54,214.96 502.96,214.85 501.65,216.89" fill="#008000"/>
<polygon points="919.8,353.8 917.65,354.91 918.96,356.95 916.54,356.84 916.65,359.26 914.61,357.95 913.5,360.1 912.39,357.95 910.35,359.26 910.46,356.84 908.04,356.95 909.35,354.91 907.2,353.8 909.35,352.69 908.04,350.65 910.46,350.76 910.35,348.34 912.39,349.65 913.5,347.5 914.61,349.65 916.65,348.34 916.54,350.76 918.96,350.65 917.65,352.69" fill="#008000"/>
<polygon points="967.8,354.6 965.65,355.71 966.96,357.75 964.54,357.64 964.65,360.06 962.61,358.75 961.5,360.9 960.39,358.75 958.35,360.06 958.46,357.64 956.04,357.75 957.35,355.71 955.2,354.6 957.35,353.49 956.04,351.45 958.46,351.56 958.35,349.14 960.39,350.45 961.5,348.3 962.61,350.45 964.65,349.14 964.54,351.56 966.96,351.45 965.65,353.49" fill="#008000"/>
<polygon points="215.8,205.0 213.65,206.11 214.96,208.15 212.54,208.04 212.65,210.46 210.61,209.15 209.5,211.3 208.39,209.15 206.35,210.46 206.46,208.04 204.04,208.15 205.35,206.11 203.2,205.0 205.35,203.89 204.04,201.85 206.46,201.96 206.35,199.54 208.39,200.85 209.5,198.7 210.61,200.85 212.65,199.54 212.54,201.96 214.96,201.85 213.65,203.89" fill="#ff0000"/>
<polygon points="263.8,210.0 261.65,211.11 262.96,213.15 260.54,213.04 260.65,215.46 258.61,214.15 257.5,216.3 256.39,214.15 254.35,215.46 254.46,213.04 252.04,213.15 253.35,211.11 251.2,210.0 253.35,208.89 252.04,206.85 254.46,206.96 254.35,204.54 256.39,205.85 257.5,203.7 258.61,205.85 260.65,204.54 260.54,206.96 262.96,206.85 261.65,208.89" fill="#ff0000"/>
<polygon points="311.8,211.0 309.65,212.11 310.96,214.15 308.54,214.04 308.65,216.46 306.61,215.15 305.5,217.3 304.39,215.15 302.35,216.46 302.46,214.04 300.04,214.15 301.35,212.11 299.2,211.0 301.35,209.89 300.04,207.85 302.46,207.96 302.35,205.54 304.39,206.85 305.5,204.7 306.61,206.85 308.65,205.54 308.54,207.96 310.96,207.85 309.65,209.89" fill="#ff0000"/>
<polygon points="455.8,215.3 453.65,216.41 454.96,218.45 452.54,218.34 452.65,220.76 450.61,219.45 449.5,221.6 448.39,219.45 446.35,220.76 446.46,218.34 444.04,218.45 445.35,216.41 443.2,215.3 445.35,214.19 444.04,212.15 446.46,212.26 446.35,209.84 448.39,211.15 449.5,209.0 450.61,211.15 452.65,209.84 452.54,212.26 454.96,212.15 453.65,214.19" fill="#ff0000"/>
<polygon points="519.8,220.7 517.65,221.81 518.96,223.85 516.54,223.74 516.65,226.16 514.61,224.85 513.5,227.0 512.39,224.85 510.35,226.16 510.46,223.74 508.04,223.85 509.35,221.81 507.2,220.7 509.35,219.59 508.04,217.55 510.46,217.66 510.35,215.24 512.39,216.55 513.5,214.4 514.61,216.55 516.65,215.24 516.54,217.66 518.96,217.55 517.65,219.59" fill="#ff0000"/>
<polygon points="951.8,353.8 949.65,354.91 950.96,356.95 948.54,356.84 948.65,359.26 946.61,357.95 945.5,360.1 944.39,357.95 942.35,359.26 942.46,356.84 940.04,356.95 941.35,354.91 939.2,353.8 941.35,352.69 940.04,350.65 942.46,350.76 942.35,348.34 944.39,349.65 945.5,347.5 946.61,349.65 948.65,348.34 948.54,350.76 950.96,350.65 949.65,352.69" fill="#ff0000"/>
<polygon points="1015.8,357.4 1013.65,358.51 1014.96,360.55 1012.54,360.44 1012.65,362.86 1010.61,361.55 1009.5,363.7 1008.39,361.55 1006.35,362.86 1006.46,360.44 1004.04,360.55 1005.35,358.51 1003.2,357.4 1005.35,356.29 1004.04,354.25 1006.46,354.36 1006.35,351.94 1008.39,353.25 1009.5,351.1 1010.61,353.25 1012.65,351.94 1012.54,354.36 1014.96,354.25 1013.65,356.29" fill="#ff0000"/>
<polygon points="161.5,253.0 169.5,260.0 165.2,260.0 165.2,270.8 157.8,270.8 157.8,260.0 153.5,260.0" fill="none" stroke="#0000ff" stroke-width="1.5" stroke-linejoin="miter"/>
<polygon points="225.5,248.5 233.5,255.5 229.2,255.5 229.2,266.3 221.8,266.3 221.8,255.5 217.5,255.5" fill="none" stroke="#0000ff" stroke-width="1.5" stroke-linejoin="miter"/>
<polygon points="257.5,224.5 265.5,231.5 261.2,231.5 261.2,242.3 253.8,242.3 253.8,231.5 249.5,231.5" fill="none" stroke="#0000ff" stroke-width="1.5" stroke-linejoin="miter"/>
<polygon points="369.5,295.5 377.5,302.5 373.2,302.5 373.2,313.3 365.8,313.3 365.8,302.5 361.5,302.5" fill="none" stroke="#0000ff" stroke-width="1.5" stroke-linejoin="miter"/>
<polygon points="481.5,267.5 489.5,274.5 485.2,274.5 485.2,285.3 477.8,285.3 477.8,274.5 473.5,274.5" fill="none" stroke="#0000ff" stroke-width="1.5" stroke-linejoin="miter"/>
<polygon points="513.5,238.3 521.5,245.3 517.2,245.3 517.2,256.1 509.8,256.1 509.8,245.3 505.5,245.3" fill="none" stroke="#0000ff" stroke-width="1.5" stroke-linejoin="miter"/>
<polygon points="897.5,380.5 905.5,387.5 901.2,387.5 901.2,398.3 893.8,398.3 893.8,387.5 889.5,387.5" fill="none" stroke="#0000ff" stroke-width="1.5" stroke-linejoin="miter"/>
<polygon points="913.5,389.5 921.5,396.5 917.2,396.5 917.2,407.3 909.8,407.3 909.8,396.5 905.5,396.5" fill="none" stroke="#0000ff" stroke-width="1.5" stroke-linejoin="miter"/>
<polygon points="945.5,380.5 953.5,387.5 949.2,387.5 949.2,398.3 941.8,398.3 941.8,387.5 937.5,387.5" fill="none" stroke="#0000ff" stroke-width="1.5" stroke-linejoin="miter"/>
<polygon points="1009.5,380.5 1017.5,387.5 1013.2,387.5 1013.2,398.3 1005.8,398.3 1005.8,387.5 1001.5,387.5" fill="none" stroke="#0000ff" stroke-width="1.5" stroke-linejoin="miter"/>
<polygon points="177.5,224.0 185.5,217.0 181.2,217.0 181.2,206.0 173.8,206.0 173.8,217.0 169.5,217.0" fill="none" stroke="#ff0000" stroke-width="1.5" stroke-linejoin="miter"/>
<polygon points="193.5,223.5 201.5,216.5 197.2,216.5 197.2,205.5 189.8,205.5 189.8,216.5 185.5,216.5" fill="none" stroke="#ff0000" stroke-width="1.5" stroke-linejoin="miter"/>
<polygon points="241.5,237.5 249.5,230.5 245.2,230.5 245.2,219.5 237.8,219.5 237.8,230.5 233.5,230.5" fill="none" stroke="#ff0000" stroke-width="1.5" stroke-linejoin="miter"/>
<polygon points="273.5,232.5 281.5,225.5 277.2,225.5 277.2,214.5 269.8,214.5 269.8,225.5 265.5,225.5" fill="none" stroke="#ff0000" stroke-width="1.5" stroke-linejoin="miter"/>
<polygon points="289.5,223.8 297.5,216.8 293.2,216.8 293.2,205.8 285.8,205.8 285.8,216.8 281.5,216.8" fill="none" stroke="#ff0000" stroke-width="1.5" stroke-linejoin="miter"/>
<polygon points="321.5,228.3 329.5,221.3 325.2,221.3 325.2,210.3 317.8,210.3 317.8,221.3 313.5,221.3" fill="none" stroke="#ff0000" stroke-width="1.5" stroke-linejoin="miter"/>
<polygon points="337.5,231.9 345.5,224.9 341.2,224.9 341.2,213.9 333.8,213.9 333.8,224.9 329.5,224.9" fill="none" stroke="#ff0000" stroke-width="1.5" stroke-linejoin="miter"/>
<polygon points="433.5,204.1 441.5,197.1 437.2,197.1 437.2,186.1 429.8,186.1 429.8,197.1 425.5,197.1" fill="none" stroke="#ff0000" stroke-width="1.5" stroke-linejoin="miter"/>
<polygon points="497.5,223.5 505.5,216.5 501.2,216.5 501.2,205.5 493.8,205.5 493.8,216.5 489.5,216.5" fill="none" stroke="#ff0000" stroke-width="1.5" stroke-linejoin="miter"/>
<polygon points="929.5,373.5 937.5,366.5 933.2,366.5 933.2,355.5 925.8,355.5 925.8,366.5 921.5,366.5" fill="none" stroke="#ff0000" stroke-width="1.5" stroke-linejoin="miter"/>
<polygon points="993.5,373.5 1001.5,366.5 997.2,366.5 997.2,355.5 989.8,355.5 989.8,366.5 985.5,366.5" fill="none" stroke="#ff0000" stroke-width="1.5" stroke-linejoin="miter"/>
<polygon points="251,189.0 254,187.5 259.2,190.45625 256.2,192.875 259.2,195.83125 256.2,198.25 259.2,201.20625 256.2,203.625 259.2,206.58125 254,209 251,207.5" fill="#fff"/>
<polygon points="252,189.5 254,188.7 257.8,190.45625 255.2,192.875 257.8,195.83125 255.2,198.25 257.8,201.20625 255.2,203.625 257.8,206.58125 254,207.8 252,207" fill="#0000ff"/>
<rect x="252" y="191.53" width="1.3" height="1.88" fill="#fff"/>
<path d="M254 192.61 L256 190.72" stroke="#fff" stroke-width="0.8"/>
<rect x="252" y="196.91" width="1.3" height="1.88" fill="#fff"/>
<path d="M254 197.98 L256 196.10" stroke="#fff" stroke-width="0.8"/>
<rect x="252" y="202.28" width="1.3" height="1.88" fill="#fff"/>
<path d="M254 203.36 L256 201.47" stroke="#fff" stroke-width="0.8"/>
<rect x="252" y="207.66" width="1.3" height="1.88" fill="#fff"/>
<path d="M254 208.73 L256 206.85" stroke="#fff" stroke-width="0.8"/>
<polygon points="395,160.5 398,159 403.2,161.84166666666667 400.2,164.16666666666666 403.2,167.00833333333333 400.2,169.33333333333331 403.2,172.175 400.2,174.5 403.2,177.34166666666667 400.2,179.66666666666666 403.2,182.50833333333333 400.2,184.83333333333331 403.2,187.675 400.2,190.0 403.2,192.84166666666667 400.2,195.16666666666666 403.2,198.00833333333335 400.2,200.33333333333334 403.2,203.175 398,205.5 395,204.0" fill="#fff"/>
<polygon points="396,161 398,160.2 401.8,161.84166666666667 399.2,164.16666666666666 401.8,167.00833333333333 399.2,169.33333333333331 401.8,172.175 399.2,174.5 401.8,177.34166666666667 399.2,179.66666666666666 401.8,182.50833333333333 399.2,184.83333333333331 401.8,187.675 399.2,190.0 401.8,192.84166666666667 399.2,195.16666666666666 401.8,198.00833333333335 399.2,200.33333333333334 401.8,203.175 398,204.3 396,203.5" fill="#0000ff"/>
<rect x="396" y="162.88" width="1.3" height="1.81" fill="#fff"/>
<path d="M398 163.91 L400 162.10" stroke="#fff" stroke-width="0.8"/>
<rect x="396" y="168.04" width="1.3" height="1.81" fill="#fff"/>
<path d="M398 169.07 L400 167.27" stroke="#fff" stroke-width="0.8"/>
<rect x="396" y="173.21" width="1.3" height="1.81" fill="#fff"/>
<path d="M398 174.24 L400 172.43" stroke="#fff" stroke-width="0.8"/>
<rect x="396" y="178.38" width="1.3" height="1.81" fill="#fff"/>
<path d="M398 179.41 L400 177.60" stroke="#fff" stroke-width="0.8"/>
<rect x="396" y="183.54" width="1.3" height="1.81" fill="#fff"/>
<path d="M398 184.57 L400 182.77" stroke="#fff" stroke-width="0.8"/>
<rect x="396" y="188.71" width="1.3" height="1.81" fill="#fff"/>
<path d="M398 189.74 L400 187.93" stroke="#fff" stroke-width="0.8"/>
<rect x="396" y="193.88" width="1.3" height="1.81" fill="#fff"/>
<path d="M398 194.91 L400 193.10" stroke="#fff" stroke-width="0.8"/>
<rect x="396" y="199.04" width="1.3" height="1.81" fill="#fff"/>
<path d="M398 200.08 L400 198.27" stroke="#fff" stroke-width="0.8"/>
<rect x="396" y="204.21" width="1.3" height="1.81" fill="#fff"/>
<path d="M398 205.24 L400 203.43" stroke="#fff" stroke-width="0.8"/>
<polygon points="939,339.8 942,338.3 947.2,341.259 944.2,343.68 947.2,346.639 944.2,349.06 947.2,352.019 944.2,354.44 947.2,357.399 944.2,359.82 947.2,362.779 942,365.2 939,363.7" fill="#fff"/>
<polygon points="940,340.3 942,339.5 945.8,341.259 943.2,343.68 945.8,346.639 943.2,349.06 945.8,352.019 943.2,354.44 945.8,357.399 943.2,359.82 945.8,362.779 942,364.0 940,363.2" fill="#0000ff"/>
<rect x="940" y="342.34" width="1.3" height="1.88" fill="#fff"/>
<path d="M942 343.41 L944 341.53" stroke="#fff" stroke-width="0.8"/>
<rect x="940" y="347.72" width="1.3" height="1.88" fill="#fff"/>
<path d="M942 348.79 L944 346.91" stroke="#fff" stroke-width="0.8"/>
<rect x="940" y="353.10" width="1.3" height="1.88" fill="#fff"/>
<path d="M942 354.17 L944 352.29" stroke="#fff" stroke-width="0.8"/>
<rect x="940" y="358.48" width="1.3" height="1.88" fill="#fff"/>
<path d="M942 359.55 L944 357.67" stroke="#fff" stroke-width="0.8"/>
<rect x="940" y="363.86" width="1.3" height="1.88" fill="#fff"/>
<path d="M942 364.93 L944 363.05" stroke="#fff" stroke-width="0.8"/>
<polygon points="971,334.8 974,333.3 979.2,336.259 976.2,338.68 979.2,341.639 976.2,344.06 979.2,347.019 976.2,349.44 979.2,352.399 976.2,354.82 979.2,357.779 974,360.2 971,358.7" fill="#fff"/>
<polygon points="972,335.3 974,334.5 977.8,336.259 975.2,338.68 977.8,341.639 975.2,344.06 977.8,347.019 975.2,349.44 977.8,352.399 975.2,354.82 977.8,357.779 974,359.0 972,358.2" fill="#0000ff"/>
<rect x="972" y="337.34" width="1.3" height="1.88" fill="#fff"/>
<path d="M974 338.41 L976 336.53" stroke="#fff" stroke-width="0.8"/>
<rect x="972" y="342.72" width="1.3" height="1.88" fill="#fff"/>
<path d="M974 343.79 L976 341.91" stroke="#fff" stroke-width="0.8"/>
<rect x="972" y="348.10" width="1.3" height="1.88" fill="#fff"/>
<path d="M974 349.17 L976 347.29" stroke="#fff" stroke-width="0.8"/>
<rect x="972" y="353.48" width="1.3" height="1.88" fill="#fff"/>
<path d="M974 354.55 L976 352.67" stroke="#fff" stroke-width="0.8"/>
<rect x="972" y="358.86" width="1.3" height="1.88" fill="#fff"/>
<path d="M974 359.93 L976 358.05" stroke="#fff" stroke-width="0.8"/>
<polygon points="363,240.5 366,239 371.2,241.8 368.2,244.0909090909091 371.2,246.8909090909091 368.2,249.1818181818182 371.2,251.9818181818182 368.2,254.27272727272728 371.2,257.07272727272726 368.2,259.3636363636364 371.2,262.1636363636364 368.2,264.45454545454544 371.2,267.25454545454545 368.2,269.5454545454545 371.2,272.3454545454546 368.2,274.6363636363636 371.2,277.43636363636364 368.2,279.7272727272727 371.2,282.52727272727276 368.2,284.8181818181818 371.2,287.6181818181818 368.2,289.9090909090909 371.2,292.7090909090909 366,295 363,293.5" fill="#fff"/>
<polygon points="364,241 366,240.2 369.8,241.8 367.2,244.0909090909091 369.8,246.8909090909091 367.2,249.1818181818182 369.8,251.9818181818182 367.2,254.27272727272728 369.8,257.07272727272726 367.2,259.3636363636364 369.8,262.1636363636364 367.2,264.45454545454544 369.8,267.25454545454545 367.2,269.5454545454545 369.8,272.3454545454546 367.2,274.6363636363636 369.8,277.43636363636364 367.2,279.7272727272727 369.8,282.52727272727276 367.2,284.8181818181818 369.8,287.6181818181818 367.2,289.9090909090909 369.8,292.7090909090909 366,293.8 364,293" fill="#ff0000"/>
<rect x="364" y="242.82" width="1.3" height="1.78" fill="#fff"/>
<path d="M366 243.84 L368 242.05" stroke="#fff" stroke-width="0.8"/>
<rect x="364" y="247.91" width="1.3" height="1.78" fill="#fff"/>
<path d="M366 248.93 L368 247.15" stroke="#fff" stroke-width="0.8"/>
<rect x="364" y="253.00" width="1.3" height="1.78" fill="#fff"/>
<path d="M366 254.02 L368 252.24" stroke="#fff" stroke-width="0.8"/>
<rect x="364" y="258.09" width="1.3" height="1.78" fill="#fff"/>
<path d="M366 259.11 L368 257.33" stroke="#fff" stroke-width="0.8"/>
<rect x="364" y="263.18" width="1.3" height="1.78" fill="#fff"/>
<path d="M366 264.20 L368 262.42" stroke="#fff" stroke-width="0.8"/>
<rect x="364" y="268.27" width="1.3" height="1.78" fill="#fff"/>
<path d="M366 269.29 L368 267.51" stroke="#fff" stroke-width="0.8"/>
<rect x="364" y="273.36" width="1.3" height="1.78" fill="#fff"/>
<path d="M366 274.38 L368 272.60" stroke="#fff" stroke-width="0.8"/>
<rect x="364" y="278.45" width="1.3" height="1.78" fill="#fff"/>
<path d="M366 279.47 L368 277.69" stroke="#fff" stroke-width="0.8"/>
<rect x="364" y="283.55" width="1.3" height="1.78" fill="#fff"/>
<path d="M366 284.56 L368 282.78" stroke="#fff" stroke-width="0.8"/>
<rect x="364" y="288.64" width="1.3" height="1.78" fill="#fff"/>
<path d="M366 289.65 L368 287.87" stroke="#fff" stroke-width="0.8"/>
<rect x="364" y="293.73" width="1.3" height="1.78" fill="#fff"/>
<path d="M366 294.75 L368 292.96" stroke="#fff" stroke-width="0.8"/>
<polygon points="459.6,231.2 462.6,229.7 467.8,232.62416666666667 464.8,235.01666666666665 467.8,237.94083333333333 464.8,240.33333333333331 467.8,243.25750000000002 464.8,245.65 467.8,248.57416666666668 464.8,250.96666666666667 467.8,253.89083333333335 464.8,256.28333333333336 467.8,259.20750000000004 462.6,261.6 459.6,260.1" fill="#fff"/>
<polygon points="460.6,231.7 462.6,230.89999999999998 466.40000000000003,232.62416666666667 463.8,235.01666666666665 466.40000000000003,237.94083333333333 463.8,240.33333333333331 466.40000000000003,243.25750000000002 463.8,245.65 466.40000000000003,248.57416666666668 463.8,250.96666666666667 466.40000000000003,253.89083333333335 463.8,256.28333333333336 466.40000000000003,259.20750000000004 462.6,260.40000000000003 460.6,259.6" fill="#ff0000"/>
<rect x="460.6" y="233.69" width="1.3" height="1.86" fill="#fff"/>
<path d="M462.6 234.75 L464.6 232.89" stroke="#fff" stroke-width="0.8"/>
<rect x="460.6" y="239.00" width="1.3" height="1.86" fill="#fff"/>
<path d="M462.6 240.07 L464.6 238.21" stroke="#fff" stroke-width="0.8"/>
<rect x="460.6" y="244.32" width="1.3" height="1.86" fill="#fff"/>
<path d="M462.6 245.38 L464.6 243.52" stroke="#fff" stroke-width="0.8"/>
<rect x="460.6" y="249.64" width="1.3" height="1.86" fill="#fff"/>
<path d="M462.6 250.70 L464.6 248.84" stroke="#fff" stroke-width="0.8"/>
<rect x="460.6" y="254.95" width="1.3" height="1.86" fill="#fff"/>
<path d="M462.6 256.02 L464.6 254.16" stroke="#fff" stroke-width="0.8"/>
<rect x="460.6" y="260.27" width="1.3" height="1.86" fill="#fff"/>
<path d="M462.6 261.33 L464.6 259.47" stroke="#fff" stroke-width="0.8"/>
<polygon points="955.3,358.9 958.3,357.4 963.5,360.359 960.5,362.78 963.5,365.739 960.5,368.15999999999997 963.5,371.11899999999997 960.5,373.53999999999996 963.5,376.499 960.5,378.92 963.5,381.879 958.3,384.3 955.3,382.8" fill="#fff"/>
<polygon points="956.3,359.4 958.3,358.59999999999997 962.0999999999999,360.359 959.5,362.78 962.0999999999999,365.739 959.5,368.15999999999997 962.0999999999999,371.11899999999997 959.5,373.53999999999996 962.0999999999999,376.499 959.5,378.92 962.0999999999999,381.879 958.3,383.1 956.3,382.3" fill="#ff0000"/>
<rect x="956.3" y="361.44" width="1.3" height="1.88" fill="#fff"/>
<path d="M958.3 362.51 L960.3 360.63" stroke="#fff" stroke-width="0.8"/>
<rect x="956.3" y="366.81" width="1.3" height="1.88" fill="#fff"/>
<path d="M958.3 367.89 L960.3 366.01" stroke="#fff" stroke-width="0.8"/>
<rect x="956.3" y="372.19" width="1.3" height="1.88" fill="#fff"/>
<path d="M958.3 373.27 L960.3 371.39" stroke="#fff" stroke-width="0.8"/>
<rect x="956.3" y="377.58" width="1.3" height="1.88" fill="#fff"/>
<path d="M958.3 378.65 L960.3 376.77" stroke="#fff" stroke-width="0.8"/>
<rect x="956.3" y="382.96" width="1.3" height="1.88" fill="#fff"/>
<path d="M958.3 384.03 L960.3 382.15" stroke="#fff" stroke-width="0.8"/>
<path d="M4 106.5 L11 106.5 L7.5 111 Z" fill="#fff"/>
<text x="16" y="112" font-size="9.3" fill="#fff" textLength="60" lengthAdjust="spacingAndGlyphs" >EURUSD,M30</text>
<text x="8" y="137" font-size="9" fill="#fff" textLength="37" lengthAdjust="spacingAndGlyphs" >Losses: 0</text>
<text x="8" y="149" font-size="9" fill="#fff" textLength="76" lengthAdjust="spacingAndGlyphs" >Up: 2147483647.0</text>
<text x="8" y="161" font-size="9" fill="#fff" textLength="76" lengthAdjust="spacingAndGlyphs" >Dn: 2147483647.0</text>
<text x="1349" y="113" font-size="9.3" fill="#fff" text-anchor="end" textLength="50" lengthAdjust="spacingAndGlyphs" >uni -1Q2MA</text>
<circle cx="1360.3" cy="110.5" r="4.6" fill="none" stroke="#fff" stroke-width="0.9"/>
<circle cx="1358.6" cy="109.3" r="0.7" fill="#fff"/><circle cx="1362" cy="109.3" r="0.7" fill="#fff"/>
<path d="M1357.8 111.6 Q1360.3 114 1362.8 111.6" stroke="#fff" stroke-width="0.9" fill="none"/>
<text x="1036.5" y="374" font-size="29.5" fill="#00ff00" textLength="89" lengthAdjust="spacingAndGlyphs" >&lt;10:57</text>
<text x="1141" y="374" font-size="29.5" fill="#00ff00" >0</text>
<text x="201" y="418.5" font-size="12.8" fill="#ff0000" textLength="259" lengthAdjust="spacingAndGlyphs" >Модификация AlertArrow www.expforex.com</text>
<rect x="0" y="453" width="1414" height="23" fill="#f0f0f0" />
<rect x="0" y="453" width="1412" height="2" fill="#fafafa" />
<rect x="0" y="455" width="1414" height="1" fill="#000" />
<rect x="2" y="455" width="92" height="19" fill="#000" />
<rect x="3" y="453" width="90" height="20" fill="#ffffff" />
<rect x="0" y="474" width="95" height="1" fill="#d8d8d8" />
<text x="13.5" y="469" font-size="12" fill="#000" textLength="67.5" lengthAdjust="spacingAndGlyphs" >EURUSD,M30</text>
<text x="105" y="469" font-size="12" fill="#6a6a6a" textLength="60" lengthAdjust="spacingAndGlyphs" >EURUSD,H1</text>
<rect x="178" y="458" width="1" height="13" fill="#555" />
<path d="M1385.5 461 L1382.5 464 L1385.5 467 Z" fill="#a8a8a8"/>
<path d="M1401.5 461 L1404.5 464 L1401.5 467 Z" fill="#a8a8a8"/>
<rect x="1412" y="456" width="1" height="20" fill="#d8d8d8" />
<rect x="0" y="476" width="1414" height="3" fill="#f0f0f0" />
<rect x="0" y="475" width="1411" height="1" fill="#fcfcfc" />
<rect x="0" y="479" width="1411" height="1" fill="#a9a9a9" />
<rect x="0" y="480" width="1394" height="23" fill="url(#gHdr)" />
<rect x="0" y="502" width="1394" height="1" fill="#cdcdcd" />
<rect x="0" y="503" width="1394" height="1" fill="#fafafa" />
<rect x="0" y="504" width="1394" height="1" fill="#c3c3c3" />
<rect x="141" y="481" width="1" height="22" fill="#dcdcdc" />
<rect x="142" y="481" width="1" height="22" fill="#ffffff" />
<rect x="255" y="481" width="1" height="22" fill="#dcdcdc" />
<rect x="256" y="481" width="1" height="22" fill="#ffffff" />
<rect x="343" y="481" width="1" height="22" fill="#dcdcdc" />
<rect x="344" y="481" width="1" height="22" fill="#ffffff" />
<rect x="457" y="481" width="1" height="22" fill="#dcdcdc" />
<rect x="458" y="481" width="1" height="22" fill="#ffffff" />
<rect x="583" y="481" width="1" height="22" fill="#dcdcdc" />
<rect x="584" y="481" width="1" height="22" fill="#ffffff" />
<rect x="709" y="481" width="1" height="22" fill="#dcdcdc" />
<rect x="710" y="481" width="1" height="22" fill="#ffffff" />
<rect x="835" y="481" width="1" height="22" fill="#dcdcdc" />
<rect x="836" y="481" width="1" height="22" fill="#ffffff" />
<rect x="961" y="481" width="1" height="22" fill="#dcdcdc" />
<rect x="962" y="481" width="1" height="22" fill="#ffffff" />
<rect x="1087" y="481" width="1" height="22" fill="#dcdcdc" />
<rect x="1088" y="481" width="1" height="22" fill="#ffffff" />
<rect x="1213" y="481" width="1" height="22" fill="#dcdcdc" />
<rect x="1214" y="481" width="1" height="22" fill="#ffffff" />
<clipPath id="hdrclip"><rect x="0" y="480" width="1393" height="25"/></clipPath>
<text x="138" y="497" font-size="12" fill="#000" text-anchor="end" >Время</text>
<text x="252" y="497" font-size="12" fill="#000" text-anchor="end" >Тип</text>
<text x="340" y="497" font-size="12" fill="#000" text-anchor="end" >Объем</text>
<text x="454" y="497" font-size="12" fill="#000" text-anchor="end" >Символ</text>
<text x="580" y="497" font-size="12" fill="#000" text-anchor="end" >Цена</text>
<text x="706" y="497" font-size="12" fill="#000" text-anchor="end" >S / L</text>
<text x="832" y="497" font-size="12" fill="#000" text-anchor="end" >T / P</text>
<text x="958" y="497" font-size="12" fill="#000" text-anchor="end" >Цена</text>
<text x="1084" y="497" font-size="12" fill="#000" text-anchor="end" >Комиссия</text>
<text x="1210" y="497" font-size="12" fill="#000" text-anchor="end" >Своп</text>
<text x="1405" y="497" font-size="12" fill="#000" text-anchor="end" clip-path="url(#hdrclip)">Прибыль</text>
<rect x="0" y="505" width="1394" height="19" fill="#ffffff" />
<rect x="0" y="524" width="1394" height="1" fill="#d2d2d2" />
<text x="138" y="518" font-size="12" fill="#000" text-anchor="end" textLength="98.5" lengthAdjust="spacingAndGlyphs" >2019.05.03 04:17:57</text>
<text x="253" y="518" font-size="12" fill="#000" text-anchor="end" >buy</text>
<text x="340.4" y="518" font-size="12" fill="#000" text-anchor="end" textLength="21.15" lengthAdjust="spacingAndGlyphs" >0.20</text>
<text x="455" y="518" font-size="12" fill="#000" text-anchor="end" >eurusd</text>
<text x="580.4" y="518" font-size="12" fill="#000" text-anchor="end" textLength="33.05" lengthAdjust="spacingAndGlyphs" >1.1179</text>
<text x="706.4" y="518" font-size="12" fill="#000" text-anchor="end" textLength="33.05" lengthAdjust="spacingAndGlyphs" >0.0000</text>
<text x="832.4" y="518" font-size="12" fill="#000" text-anchor="end" textLength="33.05" lengthAdjust="spacingAndGlyphs" >0.0000</text>
<text x="958.4" y="518" font-size="12" fill="#000" text-anchor="end" textLength="33.05" lengthAdjust="spacingAndGlyphs" >1.1173</text>
<text x="1084.4" y="518" font-size="12" fill="#000" text-anchor="end" textLength="21.15" lengthAdjust="spacingAndGlyphs" >0.00</text>
<text x="1210.4" y="518" font-size="12" fill="#000" text-anchor="end" textLength="21.15" lengthAdjust="spacingAndGlyphs" >0.00</text>
<text x="1386" y="518" font-size="12" fill="#000" text-anchor="end" textLength="24.75" lengthAdjust="spacingAndGlyphs" >-1.20</text>
<rect x="0" y="525" width="1394" height="19" fill="#ebebeb" />
<rect x="0" y="544" width="1394" height="1" fill="#d2d2d2" />
<text x="138" y="538" font-size="12" fill="#000" text-anchor="end" textLength="98.5" lengthAdjust="spacingAndGlyphs" >2019.05.03 04:18:26</text>
<text x="253" y="538" font-size="12" fill="#000" text-anchor="end" >buy</text>
<text x="340.4" y="538" font-size="12" fill="#000" text-anchor="end" textLength="21.15" lengthAdjust="spacingAndGlyphs" >0.20</text>
<text x="455" y="538" font-size="12" fill="#000" text-anchor="end" >eurusd</text>
<text x="580.4" y="538" font-size="12" fill="#000" text-anchor="end" textLength="33.05" lengthAdjust="spacingAndGlyphs" >1.1178</text>
<text x="706.4" y="538" font-size="12" fill="#000" text-anchor="end" textLength="33.05" lengthAdjust="spacingAndGlyphs" >0.0000</text>
<text x="832.4" y="538" font-size="12" fill="#000" text-anchor="end" textLength="33.05" lengthAdjust="spacingAndGlyphs" >0.0000</text>
<text x="958.4" y="538" font-size="12" fill="#000" text-anchor="end" textLength="33.05" lengthAdjust="spacingAndGlyphs" >1.1173</text>
<text x="1084.4" y="538" font-size="12" fill="#000" text-anchor="end" textLength="21.15" lengthAdjust="spacingAndGlyphs" >0.00</text>
<text x="1210.4" y="538" font-size="12" fill="#000" text-anchor="end" textLength="21.15" lengthAdjust="spacingAndGlyphs" >0.00</text>
<text x="1386" y="538" font-size="12" fill="#000" text-anchor="end" textLength="24.75" lengthAdjust="spacingAndGlyphs" >-1.00</text>
<rect x="0" y="545" width="1394" height="19" fill="#ffffff" />
<rect x="0" y="564" width="1394" height="1" fill="#d2d2d2" />
<text x="138" y="558" font-size="12" fill="#000" text-anchor="end" textLength="98.5" lengthAdjust="spacingAndGlyphs" >2019.05.03 04:19:48</text>
<text x="253" y="558" font-size="12" fill="#000" text-anchor="end" >buy</text>
<text x="340.4" y="558" font-size="12" fill="#000" text-anchor="end" textLength="21.15" lengthAdjust="spacingAndGlyphs" >0.20</text>
<text x="455" y="558" font-size="12" fill="#000" text-anchor="end" >eurusd</text>
<text x="580.4" y="558" font-size="12" fill="#000" text-anchor="end" textLength="33.05" lengthAdjust="spacingAndGlyphs" >1.1179</text>
<text x="706.4" y="558" font-size="12" fill="#000" text-anchor="end" textLength="33.05" lengthAdjust="spacingAndGlyphs" >0.0000</text>
<text x="832.4" y="558" font-size="12" fill="#000" text-anchor="end" textLength="33.05" lengthAdjust="spacingAndGlyphs" >0.0000</text>
<text x="958.4" y="558" font-size="12" fill="#000" text-anchor="end" textLength="33.05" lengthAdjust="spacingAndGlyphs" >1.1173</text>
<text x="1084.4" y="558" font-size="12" fill="#000" text-anchor="end" textLength="21.15" lengthAdjust="spacingAndGlyphs" >0.00</text>
<text x="1210.4" y="558" font-size="12" fill="#000" text-anchor="end" textLength="21.15" lengthAdjust="spacingAndGlyphs" >0.00</text>
<text x="1386" y="558" font-size="12" fill="#000" text-anchor="end" textLength="24.75" lengthAdjust="spacingAndGlyphs" >-1.20</text>
<rect x="0" y="565" width="1394" height="19" fill="#ebebeb" />
<rect x="0" y="584" width="1394" height="1" fill="#d2d2d2" />
<text x="138" y="578" font-size="12" fill="#000" text-anchor="end" textLength="98.5" lengthAdjust="spacingAndGlyphs" >2019.05.03 04:20:49</text>
<text x="253" y="578" font-size="12" fill="#000" text-anchor="end" >buy</text>
<text x="340.4" y="578" font-size="12" fill="#000" text-anchor="end" textLength="21.15" lengthAdjust="spacingAndGlyphs" >0.20</text>
<text x="455" y="578" font-size="12" fill="#000" text-anchor="end" >eurusd</text>
<text x="580.4" y="578" font-size="12" fill="#000" text-anchor="end" textLength="33.05" lengthAdjust="spacingAndGlyphs" >1.1178</text>
<text x="706.4" y="578" font-size="12" fill="#000" text-anchor="end" textLength="33.05" lengthAdjust="spacingAndGlyphs" >0.0000</text>
<text x="832.4" y="578" font-size="12" fill="#000" text-anchor="end" textLength="33.05" lengthAdjust="spacingAndGlyphs" >0.0000</text>
<text x="958.4" y="578" font-size="12" fill="#000" text-anchor="end" textLength="33.05" lengthAdjust="spacingAndGlyphs" >1.1173</text>
<text x="1084.4" y="578" font-size="12" fill="#000" text-anchor="end" textLength="21.15" lengthAdjust="spacingAndGlyphs" >0.00</text>
<text x="1210.4" y="578" font-size="12" fill="#000" text-anchor="end" textLength="21.15" lengthAdjust="spacingAndGlyphs" >0.00</text>
<text x="1386" y="578" font-size="12" fill="#000" text-anchor="end" textLength="24.75" lengthAdjust="spacingAndGlyphs" >-1.00</text>
<rect x="0" y="585" width="1394" height="19" fill="#ffffff" />
<rect x="0" y="604" width="1394" height="1" fill="#d2d2d2" />
<text x="138" y="598" font-size="12" fill="#000" text-anchor="end" textLength="98.5" lengthAdjust="spacingAndGlyphs" >2019.05.03 04:22:21</text>
<text x="253" y="598" font-size="12" fill="#000" text-anchor="end" >buy</text>
<text x="340.4" y="598" font-size="12" fill="#000" text-anchor="end" textLength="21.15" lengthAdjust="spacingAndGlyphs" >0.20</text>
<text x="455" y="598" font-size="12" fill="#000" text-anchor="end" >eurusd</text>
<text x="580.4" y="598" font-size="12" fill="#000" text-anchor="end" textLength="33.05" lengthAdjust="spacingAndGlyphs" >1.1177</text>
<text x="706.4" y="598" font-size="12" fill="#000" text-anchor="end" textLength="33.05" lengthAdjust="spacingAndGlyphs" >0.0000</text>
<text x="832.4" y="598" font-size="12" fill="#000" text-anchor="end" textLength="33.05" lengthAdjust="spacingAndGlyphs" >0.0000</text>
<text x="958.4" y="598" font-size="12" fill="#000" text-anchor="end" textLength="33.05" lengthAdjust="spacingAndGlyphs" >1.1173</text>
<text x="1084.4" y="598" font-size="12" fill="#000" text-anchor="end" textLength="21.15" lengthAdjust="spacingAndGlyphs" >0.00</text>
<text x="1210.4" y="598" font-size="12" fill="#000" text-anchor="end" textLength="21.15" lengthAdjust="spacingAndGlyphs" >0.00</text>
<text x="1386" y="598" font-size="12" fill="#000" text-anchor="end" textLength="24.75" lengthAdjust="spacingAndGlyphs" >-0.80</text>
<rect x="0" y="605" width="1394" height="19" fill="#ebebeb" />
<rect x="0" y="624" width="1394" height="1" fill="#d2d2d2" />
<text x="138" y="618" font-size="12" fill="#000" text-anchor="end" textLength="98.5" lengthAdjust="spacingAndGlyphs" >2019.05.03 04:22:31</text>
<text x="253" y="618" font-size="12" fill="#000" text-anchor="end" >buy</text>
<text x="340.4" y="618" font-size="12" fill="#000" text-anchor="end" textLength="21.15" lengthAdjust="spacingAndGlyphs" >0.20</text>
<text x="455" y="618" font-size="12" fill="#000" text-anchor="end" >eurusd</text>
<text x="580.4" y="618" font-size="12" fill="#000" text-anchor="end" textLength="33.05" lengthAdjust="spacingAndGlyphs" >1.1178</text>
<text x="706.4" y="618" font-size="12" fill="#000" text-anchor="end" textLength="33.05" lengthAdjust="spacingAndGlyphs" >0.0000</text>
<text x="832.4" y="618" font-size="12" fill="#000" text-anchor="end" textLength="33.05" lengthAdjust="spacingAndGlyphs" >0.0000</text>
<text x="958.4" y="618" font-size="12" fill="#000" text-anchor="end" textLength="33.05" lengthAdjust="spacingAndGlyphs" >1.1173</text>
<text x="1084.4" y="618" font-size="12" fill="#000" text-anchor="end" textLength="21.15" lengthAdjust="spacingAndGlyphs" >0.00</text>
<text x="1210.4" y="618" font-size="12" fill="#000" text-anchor="end" textLength="21.15" lengthAdjust="spacingAndGlyphs" >0.00</text>
<text x="1386" y="618" font-size="12" fill="#000" text-anchor="end" textLength="24.75" lengthAdjust="spacingAndGlyphs" >-1.00</text>
<rect x="0" y="625" width="1394" height="19" fill="#ffffff" />
<rect x="0" y="644" width="1394" height="1" fill="#d2d2d2" />
<text x="138" y="638" font-size="12" fill="#000" text-anchor="end" textLength="98.5" lengthAdjust="spacingAndGlyphs" >2019.05.03 04:22:32</text>
<text x="253" y="638" font-size="12" fill="#000" text-anchor="end" >buy</text>
<text x="340.4" y="638" font-size="12" fill="#000" text-anchor="end" textLength="21.15" lengthAdjust="spacingAndGlyphs" >0.20</text>
<text x="455" y="638" font-size="12" fill="#000" text-anchor="end" >eurusd</text>
<text x="580.4" y="638" font-size="12" fill="#000" text-anchor="end" textLength="33.05" lengthAdjust="spacingAndGlyphs" >1.1177</text>
<text x="706.4" y="638" font-size="12" fill="#000" text-anchor="end" textLength="33.05" lengthAdjust="spacingAndGlyphs" >0.0000</text>
<text x="832.4" y="638" font-size="12" fill="#000" text-anchor="end" textLength="33.05" lengthAdjust="spacingAndGlyphs" >0.0000</text>
<text x="958.4" y="638" font-size="12" fill="#000" text-anchor="end" textLength="33.05" lengthAdjust="spacingAndGlyphs" >1.1173</text>
<text x="1084.4" y="638" font-size="12" fill="#000" text-anchor="end" textLength="21.15" lengthAdjust="spacingAndGlyphs" >0.00</text>
<text x="1210.4" y="638" font-size="12" fill="#000" text-anchor="end" textLength="21.15" lengthAdjust="spacingAndGlyphs" >0.00</text>
<text x="1386" y="638" font-size="12" fill="#000" text-anchor="end" textLength="24.75" lengthAdjust="spacingAndGlyphs" >-0.80</text>
<rect x="0" y="645" width="1394" height="19" fill="#ebebeb" />
<rect x="0" y="664" width="1394" height="1" fill="#d2d2d2" />
<text x="138" y="658" font-size="12" fill="#000" text-anchor="end" textLength="98.5" lengthAdjust="spacingAndGlyphs" >2019.05.03 04:23:58</text>
<text x="253" y="658" font-size="12" fill="#000" text-anchor="end" >buy</text>
<text x="340.4" y="658" font-size="12" fill="#000" text-anchor="end" textLength="21.15" lengthAdjust="spacingAndGlyphs" >0.20</text>
<text x="455" y="658" font-size="12" fill="#000" text-anchor="end" >eurusd</text>
<text x="580.4" y="658" font-size="12" fill="#000" text-anchor="end" textLength="33.05" lengthAdjust="spacingAndGlyphs" >1.1178</text>
<text x="706.4" y="658" font-size="12" fill="#000" text-anchor="end" textLength="33.05" lengthAdjust="spacingAndGlyphs" >0.0000</text>
<text x="832.4" y="658" font-size="12" fill="#000" text-anchor="end" textLength="33.05" lengthAdjust="spacingAndGlyphs" >0.0000</text>
<text x="958.4" y="658" font-size="12" fill="#000" text-anchor="end" textLength="33.05" lengthAdjust="spacingAndGlyphs" >1.1173</text>
<text x="1084.4" y="658" font-size="12" fill="#000" text-anchor="end" textLength="21.15" lengthAdjust="spacingAndGlyphs" >0.00</text>
<text x="1210.4" y="658" font-size="12" fill="#000" text-anchor="end" textLength="21.15" lengthAdjust="spacingAndGlyphs" >0.00</text>
<text x="1386" y="658" font-size="12" fill="#000" text-anchor="end" textLength="24.75" lengthAdjust="spacingAndGlyphs" >-1.00</text>
<rect x="0" y="665" width="1394" height="19" fill="#ffffff" />
<rect x="0" y="684" width="1394" height="1" fill="#d2d2d2" />
<text x="138" y="678" font-size="12" fill="#000" text-anchor="end" textLength="98.5" lengthAdjust="spacingAndGlyphs" >2019.05.03 04:24:01</text>
<text x="253" y="678" font-size="12" fill="#000" text-anchor="end" >buy</text>
<text x="340.4" y="678" font-size="12" fill="#000" text-anchor="end" textLength="21.15" lengthAdjust="spacingAndGlyphs" >0.20</text>
<text x="455" y="678" font-size="12" fill="#000" text-anchor="end" >eurusd</text>
<text x="580.4" y="678" font-size="12" fill="#000" text-anchor="end" textLength="33.05" lengthAdjust="spacingAndGlyphs" >1.1177</text>
<text x="706.4" y="678" font-size="12" fill="#000" text-anchor="end" textLength="33.05" lengthAdjust="spacingAndGlyphs" >0.0000</text>
<text x="832.4" y="678" font-size="12" fill="#000" text-anchor="end" textLength="33.05" lengthAdjust="spacingAndGlyphs" >0.0000</text>
<text x="958.4" y="678" font-size="12" fill="#000" text-anchor="end" textLength="33.05" lengthAdjust="spacingAndGlyphs" >1.1173</text>
<text x="1084.4" y="678" font-size="12" fill="#000" text-anchor="end" textLength="21.15" lengthAdjust="spacingAndGlyphs" >0.00</text>
<text x="1210.4" y="678" font-size="12" fill="#000" text-anchor="end" textLength="21.15" lengthAdjust="spacingAndGlyphs" >0.00</text>
<text x="1386" y="678" font-size="12" fill="#000" text-anchor="end" textLength="24.75" lengthAdjust="spacingAndGlyphs" >-0.80</text>
<rect x="0" y="685" width="1394" height="19" fill="#ebebeb" />
<rect x="0" y="704" width="1394" height="1" fill="#d2d2d2" />
<text x="138" y="698" font-size="12" fill="#000" text-anchor="end" textLength="98.5" lengthAdjust="spacingAndGlyphs" >2019.05.03 04:24:11</text>
<text x="253" y="698" font-size="12" fill="#000" text-anchor="end" >buy</text>
<text x="340.4" y="698" font-size="12" fill="#000" text-anchor="end" textLength="21.15" lengthAdjust="spacingAndGlyphs" >0.20</text>
<text x="455" y="698" font-size="12" fill="#000" text-anchor="end" >eurusd</text>
<text x="580.4" y="698" font-size="12" fill="#000" text-anchor="end" textLength="33.05" lengthAdjust="spacingAndGlyphs" >1.1176</text>
<text x="706.4" y="698" font-size="12" fill="#000" text-anchor="end" textLength="33.05" lengthAdjust="spacingAndGlyphs" >0.0000</text>
<text x="832.4" y="698" font-size="12" fill="#000" text-anchor="end" textLength="33.05" lengthAdjust="spacingAndGlyphs" >0.0000</text>
<text x="958.4" y="698" font-size="12" fill="#000" text-anchor="end" textLength="33.05" lengthAdjust="spacingAndGlyphs" >1.1173</text>
<text x="1084.4" y="698" font-size="12" fill="#000" text-anchor="end" textLength="21.15" lengthAdjust="spacingAndGlyphs" >0.00</text>
<text x="1210.4" y="698" font-size="12" fill="#000" text-anchor="end" textLength="21.15" lengthAdjust="spacingAndGlyphs" >0.00</text>
<text x="1386" y="698" font-size="12" fill="#000" text-anchor="end" textLength="24.75" lengthAdjust="spacingAndGlyphs" >-0.60</text>
<rect x="0" y="705" width="1394" height="19" fill="#ffffff" />
<rect x="0" y="724" width="1394" height="1" fill="#d2d2d2" />
<text x="138" y="718" font-size="12" fill="#000" text-anchor="end" textLength="98.5" lengthAdjust="spacingAndGlyphs" >2019.05.03 04:24:45</text>
<text x="253" y="718" font-size="12" fill="#000" text-anchor="end" >buy</text>
<text x="340.4" y="718" font-size="12" fill="#000" text-anchor="end" textLength="21.15" lengthAdjust="spacingAndGlyphs" >0.20</text>
<text x="455" y="718" font-size="12" fill="#000" text-anchor="end" >eurusd</text>
<text x="580.4" y="718" font-size="12" fill="#000" text-anchor="end" textLength="33.05" lengthAdjust="spacingAndGlyphs" >1.1175</text>
<text x="706.4" y="718" font-size="12" fill="#000" text-anchor="end" textLength="33.05" lengthAdjust="spacingAndGlyphs" >0.0000</text>
<text x="832.4" y="718" font-size="12" fill="#000" text-anchor="end" textLength="33.05" lengthAdjust="spacingAndGlyphs" >0.0000</text>
<text x="958.4" y="718" font-size="12" fill="#000" text-anchor="end" textLength="33.05" lengthAdjust="spacingAndGlyphs" >1.1173</text>
<text x="1084.4" y="718" font-size="12" fill="#000" text-anchor="end" textLength="21.15" lengthAdjust="spacingAndGlyphs" >0.00</text>
<text x="1210.4" y="718" font-size="12" fill="#000" text-anchor="end" textLength="21.15" lengthAdjust="spacingAndGlyphs" >0.00</text>
<text x="1386" y="718" font-size="12" fill="#000" text-anchor="end" textLength="24.75" lengthAdjust="spacingAndGlyphs" >-0.40</text>
<rect x="0" y="725" width="1394" height="19" fill="#ebebeb" />
<rect x="0" y="744" width="1394" height="1" fill="#d2d2d2" />
<text x="138" y="738" font-size="12" fill="#000" text-anchor="end" textLength="98.5" lengthAdjust="spacingAndGlyphs" >2019.05.03 04:27:23</text>
<text x="253" y="738" font-size="12" fill="#000" text-anchor="end" >buy</text>
<text x="340.4" y="738" font-size="12" fill="#000" text-anchor="end" textLength="21.15" lengthAdjust="spacingAndGlyphs" >0.20</text>
<text x="455" y="738" font-size="12" fill="#000" text-anchor="end" >eurusd</text>
<text x="580.4" y="738" font-size="12" fill="#000" text-anchor="end" textLength="33.05" lengthAdjust="spacingAndGlyphs" >1.1176</text>
<text x="706.4" y="738" font-size="12" fill="#000" text-anchor="end" textLength="33.05" lengthAdjust="spacingAndGlyphs" >0.0000</text>
<text x="832.4" y="738" font-size="12" fill="#000" text-anchor="end" textLength="33.05" lengthAdjust="spacingAndGlyphs" >0.0000</text>
<text x="958.4" y="738" font-size="12" fill="#000" text-anchor="end" textLength="33.05" lengthAdjust="spacingAndGlyphs" >1.1173</text>
<text x="1084.4" y="738" font-size="12" fill="#000" text-anchor="end" textLength="21.15" lengthAdjust="spacingAndGlyphs" >0.00</text>
<text x="1210.4" y="738" font-size="12" fill="#000" text-anchor="end" textLength="21.15" lengthAdjust="spacingAndGlyphs" >0.00</text>
<text x="1386" y="738" font-size="12" fill="#000" text-anchor="end" textLength="24.75" lengthAdjust="spacingAndGlyphs" >-0.60</text>
<rect x="0" y="745" width="1394" height="19" fill="#ffffff" />
<rect x="0" y="764" width="1394" height="1" fill="#d2d2d2" />
<text x="138" y="758" font-size="12" fill="#000" text-anchor="end" textLength="98.5" lengthAdjust="spacingAndGlyphs" >2019.05.03 04:30:01</text>
<text x="253" y="758" font-size="12" fill="#000" text-anchor="end" >sell</text>
<text x="340.4" y="758" font-size="12" fill="#000" text-anchor="end" textLength="21.15" lengthAdjust="spacingAndGlyphs" >0.20</text>
<text x="455" y="758" font-size="12" fill="#000" text-anchor="end" >eurusd</text>
<text x="580.4" y="758" font-size="12" fill="#000" text-anchor="end" textLength="33.05" lengthAdjust="spacingAndGlyphs" >1.1172</text>
<text x="706.4" y="758" font-size="12" fill="#000" text-anchor="end" textLength="33.05" lengthAdjust="spacingAndGlyphs" >0.0000</text>
<text x="832.4" y="758" font-size="12" fill="#000" text-anchor="end" textLength="33.05" lengthAdjust="spacingAndGlyphs" >0.0000</text>
<text x="958.4" y="758" font-size="12" fill="#000" text-anchor="end" textLength="33.05" lengthAdjust="spacingAndGlyphs" >1.1176</text>
<text x="1084.4" y="758" font-size="12" fill="#000" text-anchor="end" textLength="21.15" lengthAdjust="spacingAndGlyphs" >0.00</text>
<text x="1210.4" y="758" font-size="12" fill="#000" text-anchor="end" textLength="21.15" lengthAdjust="spacingAndGlyphs" >0.00</text>
<text x="1386" y="758" font-size="12" fill="#000" text-anchor="end" textLength="24.75" lengthAdjust="spacingAndGlyphs" >-0.80</text>
<rect x="0" y="765" width="1394" height="19" fill="#ebebeb" />
<rect x="0" y="784" width="1394" height="1" fill="#d2d2d2" />
<text x="138" y="778" font-size="12" fill="#000" text-anchor="end" textLength="98.5" lengthAdjust="spacingAndGlyphs" >2019.05.03 04:30:03</text>
<text x="253" y="778" font-size="12" fill="#000" text-anchor="end" >sell</text>
<text x="340.4" y="778" font-size="12" fill="#000" text-anchor="end" textLength="21.15" lengthAdjust="spacingAndGlyphs" >0.20</text>
<text x="455" y="778" font-size="12" fill="#000" text-anchor="end" >eurusd</text>
<text x="580.4" y="778" font-size="12" fill="#000" text-anchor="end" textLength="33.05" lengthAdjust="spacingAndGlyphs" >1.1173</text>
<text x="706.4" y="778" font-size="12" fill="#000" text-anchor="end" textLength="33.05" lengthAdjust="spacingAndGlyphs" >0.0000</text>
<text x="832.4" y="778" font-size="12" fill="#000" text-anchor="end" textLength="33.05" lengthAdjust="spacingAndGlyphs" >0.0000</text>
<text x="958.4" y="778" font-size="12" fill="#000" text-anchor="end" textLength="33.05" lengthAdjust="spacingAndGlyphs" >1.1176</text>
<text x="1084.4" y="778" font-size="12" fill="#000" text-anchor="end" textLength="21.15" lengthAdjust="spacingAndGlyphs" >0.00</text>
<text x="1210.4" y="778" font-size="12" fill="#000" text-anchor="end" textLength="21.15" lengthAdjust="spacingAndGlyphs" >0.00</text>
<text x="1386" y="778" font-size="12" fill="#000" text-anchor="end" textLength="24.75" lengthAdjust="spacingAndGlyphs" >-0.60</text>
<rect x="0" y="785" width="1394" height="19" fill="#ffffff" />
<rect x="0" y="804" width="1394" height="1" fill="#d2d2d2" />
<text x="138" y="798" font-size="12" fill="#000" text-anchor="end" textLength="98.5" lengthAdjust="spacingAndGlyphs" >2019.05.03 04:30:04</text>
<text x="253" y="798" font-size="12" fill="#000" text-anchor="end" >sell</text>
<text x="340.4" y="798" font-size="12" fill="#000" text-anchor="end" textLength="21.15" lengthAdjust="spacingAndGlyphs" >0.20</text>
<text x="455" y="798" font-size="12" fill="#000" text-anchor="end" >eurusd</text>
<text x="580.4" y="798" font-size="12" fill="#000" text-anchor="end" textLength="33.05" lengthAdjust="spacingAndGlyphs" >1.1172</text>
<text x="706.4" y="798" font-size="12" fill="#000" text-anchor="end" textLength="33.05" lengthAdjust="spacingAndGlyphs" >0.0000</text>
<text x="832.4" y="798" font-size="12" fill="#000" text-anchor="end" textLength="33.05" lengthAdjust="spacingAndGlyphs" >0.0000</text>
<text x="958.4" y="798" font-size="12" fill="#000" text-anchor="end" textLength="33.05" lengthAdjust="spacingAndGlyphs" >1.1176</text>
<text x="1084.4" y="798" font-size="12" fill="#000" text-anchor="end" textLength="21.15" lengthAdjust="spacingAndGlyphs" >0.00</text>
<text x="1210.4" y="798" font-size="12" fill="#000" text-anchor="end" textLength="21.15" lengthAdjust="spacingAndGlyphs" >0.00</text>
<text x="1386" y="798" font-size="12" fill="#000" text-anchor="end" textLength="24.75" lengthAdjust="spacingAndGlyphs" >-0.80</text>
<rect x="0" y="805" width="1394" height="19" fill="#ebebeb" />
<rect x="0" y="824" width="1394" height="1" fill="#d2d2d2" />
<text x="138" y="818" font-size="12" fill="#000" text-anchor="end" textLength="98.5" lengthAdjust="spacingAndGlyphs" >2019.05.03 04:30:05</text>
<text x="253" y="818" font-size="12" fill="#000" text-anchor="end" >sell</text>
<text x="340.4" y="818" font-size="12" fill="#000" text-anchor="end" textLength="21.15" lengthAdjust="spacingAndGlyphs" >0.20</text>
<text x="455" y="818" font-size="12" fill="#000" text-anchor="end" >eurusd</text>
<text x="580.4" y="818" font-size="12" fill="#000" text-anchor="end" textLength="33.05" lengthAdjust="spacingAndGlyphs" >1.1171</text>
<text x="706.4" y="818" font-size="12" fill="#000" text-anchor="end" textLength="33.05" lengthAdjust="spacingAndGlyphs" >0.0000</text>
<text x="832.4" y="818" font-size="12" fill="#000" text-anchor="end" textLength="33.05" lengthAdjust="spacingAndGlyphs" >0.0000</text>
<text x="958.4" y="818" font-size="12" fill="#000" text-anchor="end" textLength="33.05" lengthAdjust="spacingAndGlyphs" >1.1176</text>
<text x="1084.4" y="818" font-size="12" fill="#000" text-anchor="end" textLength="21.15" lengthAdjust="spacingAndGlyphs" >0.00</text>
<text x="1210.4" y="818" font-size="12" fill="#000" text-anchor="end" textLength="21.15" lengthAdjust="spacingAndGlyphs" >0.00</text>
<text x="1386" y="818" font-size="12" fill="#000" text-anchor="end" textLength="24.75" lengthAdjust="spacingAndGlyphs" >-1.00</text>
<rect x="0" y="825" width="1394" height="19" fill="#ffffff" />
<rect x="0" y="844" width="1394" height="1" fill="#d2d2d2" />
<text x="138" y="838" font-size="12" fill="#000" text-anchor="end" textLength="98.5" lengthAdjust="spacingAndGlyphs" >2019.05.03 04:30:55</text>
<text x="253" y="838" font-size="12" fill="#000" text-anchor="end" >sell</text>
<text x="340.4" y="838" font-size="12" fill="#000" text-anchor="end" textLength="21.15" lengthAdjust="spacingAndGlyphs" >0.20</text>
<text x="455" y="838" font-size="12" fill="#000" text-anchor="end" >eurusd</text>
<text x="580.4" y="838" font-size="12" fill="#000" text-anchor="end" textLength="33.05" lengthAdjust="spacingAndGlyphs" >1.1172</text>
<text x="706.4" y="838" font-size="12" fill="#000" text-anchor="end" textLength="33.05" lengthAdjust="spacingAndGlyphs" >0.0000</text>
<text x="832.4" y="838" font-size="12" fill="#000" text-anchor="end" textLength="33.05" lengthAdjust="spacingAndGlyphs" >0.0000</text>
<text x="958.4" y="838" font-size="12" fill="#000" text-anchor="end" textLength="33.05" lengthAdjust="spacingAndGlyphs" >1.1176</text>
<text x="1084.4" y="838" font-size="12" fill="#000" text-anchor="end" textLength="21.15" lengthAdjust="spacingAndGlyphs" >0.00</text>
<text x="1210.4" y="838" font-size="12" fill="#000" text-anchor="end" textLength="21.15" lengthAdjust="spacingAndGlyphs" >0.00</text>
<text x="1386" y="838" font-size="12" fill="#000" text-anchor="end" textLength="24.75" lengthAdjust="spacingAndGlyphs" >-0.80</text>
<rect x="0" y="845" width="1394" height="19" fill="#ebebeb" />
<rect x="0" y="864" width="1394" height="1" fill="#d2d2d2" />
<text x="138" y="858" font-size="12" fill="#000" text-anchor="end" textLength="98.5" lengthAdjust="spacingAndGlyphs" >2019.05.03 04:32:08</text>
<text x="253" y="858" font-size="12" fill="#000" text-anchor="end" >sell</text>
<text x="340.4" y="858" font-size="12" fill="#000" text-anchor="end" textLength="21.15" lengthAdjust="spacingAndGlyphs" >0.20</text>
<text x="455" y="858" font-size="12" fill="#000" text-anchor="end" >eurusd</text>
<text x="580.4" y="858" font-size="12" fill="#000" text-anchor="end" textLength="33.05" lengthAdjust="spacingAndGlyphs" >1.1171</text>
<text x="706.4" y="858" font-size="12" fill="#000" text-anchor="end" textLength="33.05" lengthAdjust="spacingAndGlyphs" >0.0000</text>
<text x="832.4" y="858" font-size="12" fill="#000" text-anchor="end" textLength="33.05" lengthAdjust="spacingAndGlyphs" >0.0000</text>
<text x="958.4" y="858" font-size="12" fill="#000" text-anchor="end" textLength="33.05" lengthAdjust="spacingAndGlyphs" >1.1176</text>
<text x="1084.4" y="858" font-size="12" fill="#000" text-anchor="end" textLength="21.15" lengthAdjust="spacingAndGlyphs" >0.00</text>
<text x="1210.4" y="858" font-size="12" fill="#000" text-anchor="end" textLength="21.15" lengthAdjust="spacingAndGlyphs" >0.00</text>
<text x="1386" y="858" font-size="12" fill="#000" text-anchor="end" textLength="24.75" lengthAdjust="spacingAndGlyphs" >-1.00</text>
<rect x="0" y="865" width="1394" height="19" fill="#ffffff" />
<rect x="0" y="884" width="1394" height="1" fill="#d2d2d2" />
<text x="138" y="878" font-size="12" fill="#000" text-anchor="end" textLength="98.5" lengthAdjust="spacingAndGlyphs" >2019.05.03 04:32:13</text>
<text x="253" y="878" font-size="12" fill="#000" text-anchor="end" >sell</text>
<text x="340.4" y="878" font-size="12" fill="#000" text-anchor="end" textLength="21.15" lengthAdjust="spacingAndGlyphs" >0.20</text>
<text x="455" y="878" font-size="12" fill="#000" text-anchor="end" >eurusd</text>
<text x="580.4" y="878" font-size="12" fill="#000" text-anchor="end" textLength="33.05" lengthAdjust="spacingAndGlyphs" >1.1172</text>
<text x="706.4" y="878" font-size="12" fill="#000" text-anchor="end" textLength="33.05" lengthAdjust="spacingAndGlyphs" >0.0000</text>
<text x="832.4" y="878" font-size="12" fill="#000" text-anchor="end" textLength="33.05" lengthAdjust="spacingAndGlyphs" >0.0000</text>
<text x="958.4" y="878" font-size="12" fill="#000" text-anchor="end" textLength="33.05" lengthAdjust="spacingAndGlyphs" >1.1176</text>
<text x="1084.4" y="878" font-size="12" fill="#000" text-anchor="end" textLength="21.15" lengthAdjust="spacingAndGlyphs" >0.00</text>
<text x="1210.4" y="878" font-size="12" fill="#000" text-anchor="end" textLength="21.15" lengthAdjust="spacingAndGlyphs" >0.00</text>
<text x="1386" y="878" font-size="12" fill="#000" text-anchor="end" textLength="24.75" lengthAdjust="spacingAndGlyphs" >-0.80</text>
<rect x="0" y="885" width="1394" height="19" fill="#ebebeb" />
<rect x="0" y="904" width="1394" height="1" fill="#d2d2d2" />
<text x="138" y="898" font-size="12" fill="#000" text-anchor="end" textLength="98.5" lengthAdjust="spacingAndGlyphs" >2019.05.03 04:32:19</text>
<text x="253" y="898" font-size="12" fill="#000" text-anchor="end" >sell</text>
<text x="340.4" y="898" font-size="12" fill="#000" text-anchor="end" textLength="21.15" lengthAdjust="spacingAndGlyphs" >0.20</text>
<text x="455" y="898" font-size="12" fill="#000" text-anchor="end" >eurusd</text>
<text x="580.4" y="898" font-size="12" fill="#000" text-anchor="end" textLength="33.05" lengthAdjust="spacingAndGlyphs" >1.1171</text>
<text x="706.4" y="898" font-size="12" fill="#000" text-anchor="end" textLength="33.05" lengthAdjust="spacingAndGlyphs" >0.0000</text>
<text x="832.4" y="898" font-size="12" fill="#000" text-anchor="end" textLength="33.05" lengthAdjust="spacingAndGlyphs" >0.0000</text>
<text x="958.4" y="898" font-size="12" fill="#000" text-anchor="end" textLength="33.05" lengthAdjust="spacingAndGlyphs" >1.1176</text>
<text x="1084.4" y="898" font-size="12" fill="#000" text-anchor="end" textLength="21.15" lengthAdjust="spacingAndGlyphs" >0.00</text>
<text x="1210.4" y="898" font-size="12" fill="#000" text-anchor="end" textLength="21.15" lengthAdjust="spacingAndGlyphs" >0.00</text>
<text x="1386" y="898" font-size="12" fill="#000" text-anchor="end" textLength="24.75" lengthAdjust="spacingAndGlyphs" >-1.00</text>
<rect x="0" y="905" width="1394" height="19" fill="#ffffff" />
<rect x="0" y="924" width="1394" height="1" fill="#d2d2d2" />
<text x="138" y="918" font-size="12" fill="#000" text-anchor="end" textLength="98.5" lengthAdjust="spacingAndGlyphs" >2019.05.03 04:32:27</text>
<text x="253" y="918" font-size="12" fill="#000" text-anchor="end" >sell</text>
<text x="340.4" y="918" font-size="12" fill="#000" text-anchor="end" textLength="21.15" lengthAdjust="spacingAndGlyphs" >0.20</text>
<text x="455" y="918" font-size="12" fill="#000" text-anchor="end" >eurusd</text>
<text x="580.4" y="918" font-size="12" fill="#000" text-anchor="end" textLength="33.05" lengthAdjust="spacingAndGlyphs" >1.1172</text>
<text x="706.4" y="918" font-size="12" fill="#000" text-anchor="end" textLength="33.05" lengthAdjust="spacingAndGlyphs" >0.0000</text>
<text x="832.4" y="918" font-size="12" fill="#000" text-anchor="end" textLength="33.05" lengthAdjust="spacingAndGlyphs" >0.0000</text>
<text x="958.4" y="918" font-size="12" fill="#000" text-anchor="end" textLength="33.05" lengthAdjust="spacingAndGlyphs" >1.1176</text>
<text x="1084.4" y="918" font-size="12" fill="#000" text-anchor="end" textLength="21.15" lengthAdjust="spacingAndGlyphs" >0.00</text>
<text x="1210.4" y="918" font-size="12" fill="#000" text-anchor="end" textLength="21.15" lengthAdjust="spacingAndGlyphs" >0.00</text>
<text x="1386" y="918" font-size="12" fill="#000" text-anchor="end" textLength="24.75" lengthAdjust="spacingAndGlyphs" >-0.80</text>
<rect x="0" y="925" width="1394" height="19" fill="#ebebeb" />
<rect x="0" y="944" width="1394" height="1" fill="#d2d2d2" />
<text x="138" y="938" font-size="12" fill="#000" text-anchor="end" textLength="98.5" lengthAdjust="spacingAndGlyphs" >2019.05.03 04:33:28</text>
<text x="253" y="938" font-size="12" fill="#000" text-anchor="end" >sell</text>
<text x="340.4" y="938" font-size="12" fill="#000" text-anchor="end" textLength="21.15" lengthAdjust="spacingAndGlyphs" >0.20</text>
<text x="455" y="938" font-size="12" fill="#000" text-anchor="end" >eurusd</text>
<text x="580.4" y="938" font-size="12" fill="#000" text-anchor="end" textLength="33.05" lengthAdjust="spacingAndGlyphs" >1.1171</text>
<text x="706.4" y="938" font-size="12" fill="#000" text-anchor="end" textLength="33.05" lengthAdjust="spacingAndGlyphs" >0.0000</text>
<text x="832.4" y="938" font-size="12" fill="#000" text-anchor="end" textLength="33.05" lengthAdjust="spacingAndGlyphs" >0.0000</text>
<text x="958.4" y="938" font-size="12" fill="#000" text-anchor="end" textLength="33.05" lengthAdjust="spacingAndGlyphs" >1.1176</text>
<text x="1084.4" y="938" font-size="12" fill="#000" text-anchor="end" textLength="21.15" lengthAdjust="spacingAndGlyphs" >0.00</text>
<text x="1210.4" y="938" font-size="12" fill="#000" text-anchor="end" textLength="21.15" lengthAdjust="spacingAndGlyphs" >0.00</text>
<text x="1386" y="938" font-size="12" fill="#000" text-anchor="end" textLength="24.75" lengthAdjust="spacingAndGlyphs" >-1.00</text>
<rect x="140" y="505" width="1" height="440" fill="#d2d2d2" />
<rect x="254" y="505" width="1" height="440" fill="#d2d2d2" />
<rect x="342" y="505" width="1" height="440" fill="#d2d2d2" />
<rect x="456" y="505" width="1" height="440" fill="#d2d2d2" />
<rect x="582" y="505" width="1" height="440" fill="#d2d2d2" />
<rect x="708" y="505" width="1" height="440" fill="#d2d2d2" />
<rect x="834" y="505" width="1" height="440" fill="#d2d2d2" />
<rect x="960" y="505" width="1" height="440" fill="#d2d2d2" />
<rect x="1086" y="505" width="1" height="440" fill="#d2d2d2" />
<rect x="1212" y="505" width="1" height="440" fill="#d2d2d2" />
<rect x="0" y="945" width="1394" height="1" fill="#c0c0c0" />
<rect x="1394" y="480" width="16" height="465" fill="#ececec" />
<rect x="1394" y="480" width="1" height="465" fill="#e2e2e2" />
<path d="M1398.5 490.5 L1402.5 486.5 L1406.5 490.5 Z" fill="#404040"/>
<rect x="1395.5" y="567.5" width="13" height="94" rx="2" fill="url(#gVScroll)" stroke="#9a9a9a"/>
<rect x="1399" y="612" width="6" height="1" fill="#555" />
<rect x="1399" y="614" width="6" height="1" fill="#555" />
<rect x="1399" y="616" width="6" height="1" fill="#555" />
<path d="M1398.5 933.5 L1406.5 933.5 L1402.5 937.5 Z" fill="#404040"/>
<rect x="0" y="946" width="1410" height="15" fill="#f0f0f0" />
<rect x="-2.5" y="946.5" width="1361" height="13" rx="2" fill="url(#gScroll)" stroke="#a0a0a0"/>
<rect x="559" y="950" width="1" height="6" fill="#444" />
<rect x="562" y="950" width="1" height="6" fill="#444" />
<rect x="565" y="950" width="1" height="6" fill="#444" />
<path d="M1383.5 949 L1387.5 952.5 L1383.5 956 Z" fill="#404040"/>
<rect x="1359" y="946" width="34" height="14" fill="#ececec" />
<path d="M1383.5 949 L1387.5 952.5 L1383.5 956 Z" fill="#404040"/>
<rect x="0" y="961" width="1410" height="1" fill="#000" />
<rect x="0" y="962" width="1410" height="1" fill="#6a6a6a" />
<rect x="0" y="963" width="1414" height="21" fill="#f0f0f0" />
<rect x="1411" y="961" width="1" height="23" fill="#fafafa" />
<text x="-5.5" y="976" font-size="12" fill="#555" textLength="49" lengthAdjust="spacingAndGlyphs" >Новости</text>
<text x="64" y="976" font-size="12" fill="#555" textLength="41" lengthAdjust="spacingAndGlyphs" >Алерты</text>
<text x="126.5" y="976" font-size="12" fill="#555" textLength="33" lengthAdjust="spacingAndGlyphs" >Почта</text>
<text x="192" y="976" font-size="12" fill="#555" textLength="41" lengthAdjust="spacingAndGlyphs" >Маркет</text>
<text x="270" y="976" font-size="12" fill="#555" textLength="48" lengthAdjust="spacingAndGlyphs" >Сигналы</text>
<text x="339" y="976" font-size="12" fill="#555" textLength="36.5" lengthAdjust="spacingAndGlyphs" >Статьи</text>
<text x="396" y="976" font-size="12" fill="#555" textLength="64" lengthAdjust="spacingAndGlyphs" >Библиотека</text>
<text x="481" y="976" font-size="12" fill="#555" textLength="52.5" lengthAdjust="spacingAndGlyphs" >Эксперты</text>
<text x="554" y="976" font-size="12" fill="#555" textLength="43.5" lengthAdjust="spacingAndGlyphs" >Журнал</text>
<rect x="54" y="965" width="1" height="14" fill="#555" />
<rect x="116" y="965" width="1" height="14" fill="#555" />
<rect x="182" y="965" width="1" height="14" fill="#555" />
<rect x="260" y="965" width="1" height="14" fill="#555" />
<rect x="329" y="965" width="1" height="14" fill="#555" />
<rect x="386" y="965" width="1" height="14" fill="#555" />
<rect x="471" y="965" width="1" height="14" fill="#555" />
<rect x="544" y="965" width="1" height="14" fill="#555" />
<rect x="608" y="965" width="1" height="14" fill="#555" />
<text x="162" y="978" font-size="9" fill="#e00000" textLength="10" lengthAdjust="spacingAndGlyphs" font-weight="bold" >11</text>
<text x="234.6" y="978" font-size="9" fill="#e00000" textLength="15" lengthAdjust="spacingAndGlyphs" font-weight="bold" >141</text>
<rect x="0" y="984" width="1414" height="1" fill="#ffffff" />
<rect x="0" y="985" width="1414" height="1" fill="#f0f0f0" />
<rect x="0" y="986" width="1414" height="1" fill="#a9a9a9" />
<rect x="0" y="987" width="1414" height="17" fill="#f0f0f0" />
<rect x="720" y="991" width="1" height="13" fill="#a8a8a8" />
<rect x="836" y="991" width="1" height="13" fill="#a8a8a8" />
<rect x="938" y="991" width="1" height="13" fill="#a8a8a8" />
<rect x="1009" y="991" width="1" height="13" fill="#a8a8a8" />
<rect x="1080" y="991" width="1" height="13" fill="#a8a8a8" />
<rect x="1149" y="991" width="1" height="13" fill="#a8a8a8" />
<rect x="1218" y="991" width="1" height="13" fill="#a8a8a8" />
<rect x="1285" y="991" width="1" height="13" fill="#a8a8a8" />
<text x="726" y="1004" font-size="12" fill="#000" textLength="84" lengthAdjust="spacingAndGlyphs" >Trend_Cashi v21</text>
<text x="842" y="1004" font-size="12" fill="#000" textLength="84" lengthAdjust="spacingAndGlyphs" >2019.05.02 17:00</text>
<text x="944" y="1004" font-size="12" fill="#000" textLength="48" lengthAdjust="spacingAndGlyphs" >O: 1.1184</text>
<text x="1015" y="1004" font-size="12" fill="#000" textLength="48" lengthAdjust="spacingAndGlyphs" >H: 1.1187</text>
<text x="1086" y="1004" font-size="12" fill="#000" textLength="46" lengthAdjust="spacingAndGlyphs" >L: 1.1177</text>
<text x="1154" y="1004" font-size="12" fill="#000" textLength="47" lengthAdjust="spacingAndGlyphs" >C: 1.1179</text>
<text x="1223" y="1004" font-size="12" fill="#000" textLength="26" lengthAdjust="spacingAndGlyphs" >V: 88</text>
<rect x="1290.0" y="994.0" width="1.4" height="6" fill="#6a8a10" />
<rect x="1290.0" y="998" width="1.4" height="6" fill="#b01010" />
<rect x="1292.5" y="993.1" width="1.4" height="6" fill="#6a8a10" />
<rect x="1292.5" y="998" width="1.4" height="6" fill="#b01010" />
<rect x="1295.0" y="992.2" width="1.4" height="6" fill="#6a8a10" />
<rect x="1295.0" y="998" width="1.4" height="6" fill="#b01010" />
<rect x="1297.5" y="991.3" width="1.4" height="6" fill="#6a8a10" />
<rect x="1297.5" y="998" width="1.4" height="6" fill="#b01010" />
<rect x="1300.0" y="990.4" width="1.4" height="6" fill="#6a8a10" />
<rect x="1300.0" y="998" width="1.4" height="6" fill="#b01010" />
<rect x="1302.5" y="989.5" width="1.4" height="6" fill="#6a8a10" />
<rect x="1302.5" y="998" width="1.4" height="6" fill="#b01010" />
<rect x="1305.0" y="988.6" width="1.4" height="6" fill="#6a8a10" />
<rect x="1305.0" y="998" width="1.4" height="6" fill="#b01010" />
<rect x="1307.5" y="987.7" width="1.4" height="6" fill="#6a8a10" />
<rect x="1307.5" y="998" width="1.4" height="6" fill="#b01010" />
<rect x="1310.0" y="986.8" width="1.4" height="6" fill="#6a8a10" />
<rect x="1310.0" y="998" width="1.4" height="6" fill="#b01010" />
<rect x="1312.5" y="985.9" width="1.4" height="6" fill="#6a8a10" />
<rect x="1312.5" y="998" width="1.4" height="6" fill="#b01010" />
<text x="1315" y="1004" font-size="12" fill="#000" textLength="59" lengthAdjust="spacingAndGlyphs" >5296/54 kb</text>
</svg></body></html>
